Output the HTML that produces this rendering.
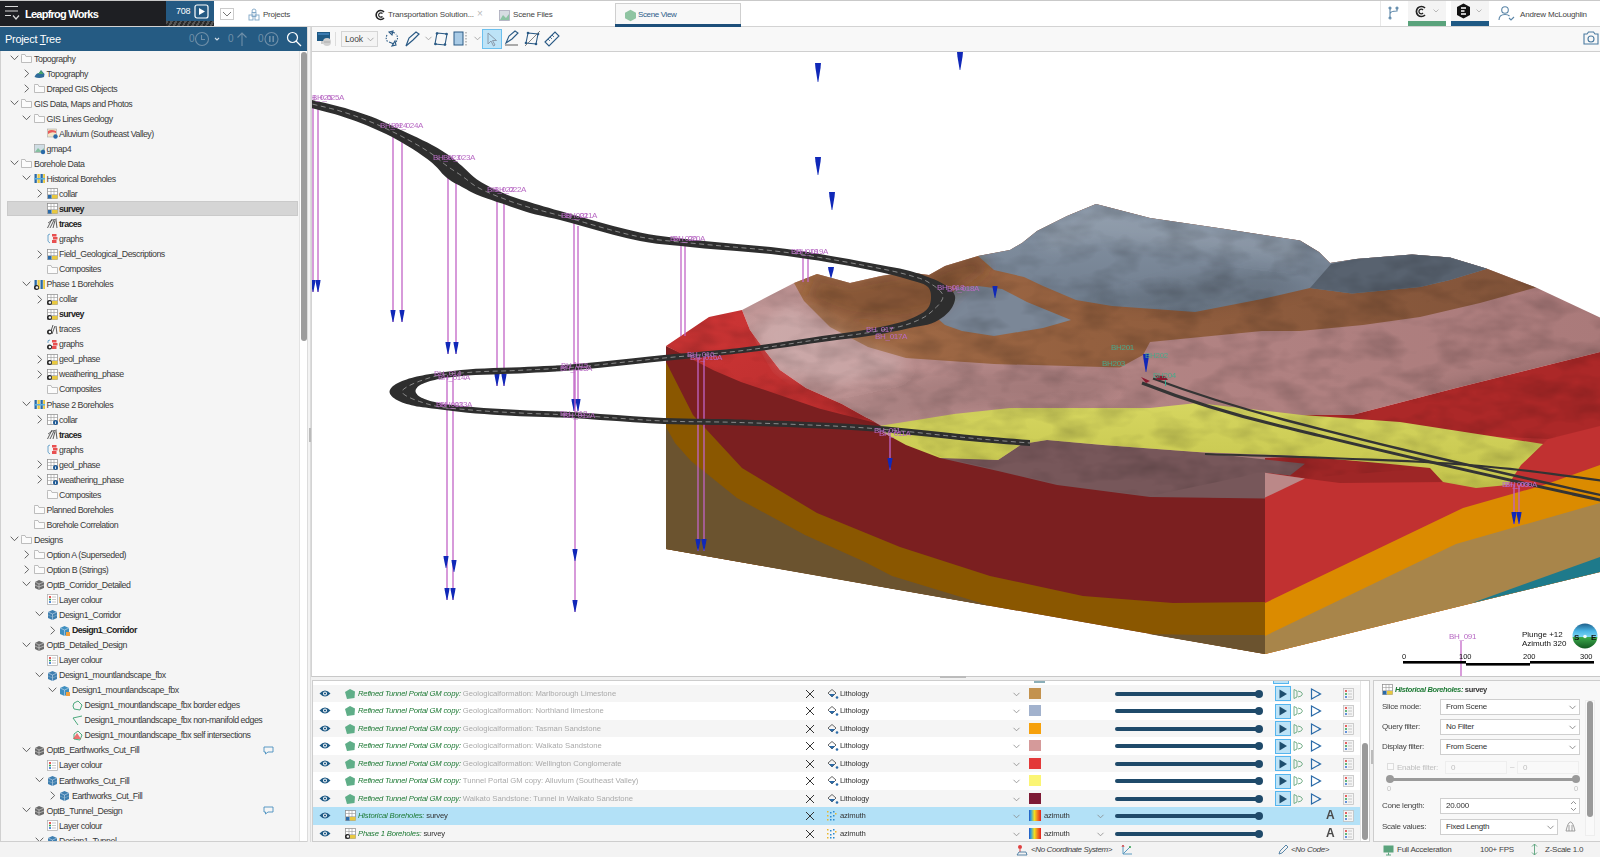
<!DOCTYPE html><html><head><meta charset="utf-8"><style>

*{box-sizing:border-box;margin:0;padding:0}
html,body{width:1600px;height:857px;overflow:hidden;background:#fff;font-family:"Liberation Sans",sans-serif;color:#333}
body{position:relative}
.a{position:absolute}
.tx{position:absolute;white-space:nowrap;font-size:8px;line-height:10px;color:#3a3a3a;letter-spacing:-0.15px}
svg{position:absolute;overflow:visible}


#topbar{left:0;top:0;width:1600px;height:27px;background:#fff;border-top:1px solid #c9c9c9;border-bottom:1px solid #d3d3d3}
#brand{left:0;top:1px;width:166px;height:25px;background:#1e1f23}
#cnt{left:166px;top:1px;width:48px;height:20px;background:#255a83}
#prog{left:166px;top:21px;width:48px;height:5px;background:repeating-linear-gradient(-60deg,#2a2a2a 0 2px,#555 2px 4px)}
#tab{left:615px;top:3px;width:126px;height:24px;background:#f8f8f8;border:1px solid #cfcfcf;border-bottom:none}
#tabline{left:615px;top:24px;width:126px;height:3px;background:#1d4f7a}
#treehdr{left:0;top:27px;width:308px;height:24px;background:#255b83}
#scenetb{left:311px;top:27px;width:1289px;height:25px;background:#f8f8f8;border-left:1px solid #d3d3d3;border-bottom:1px solid #cfcfcf}


#tree{left:0;top:51px;width:308px;height:791px;background:#f5f5f5;border-left:1px solid #d0d0d0;border-bottom:1px solid #cfcfcf;overflow:hidden}
.tr{position:absolute;left:0;width:300px;height:15px}
.tr .t{position:absolute;top:2.6px;white-space:nowrap;font-size:8.8px;line-height:10px;color:#3a3a3a;letter-spacing:-0.45px}
.tr svg{position:absolute}


.br{position:absolute;left:0;width:1047px;height:17.5px}
.br .t{position:absolute;top:4px;white-space:nowrap;font-size:7.7px;line-height:10px;letter-spacing:-0.2px}
.br svg{position:absolute}
.cb{position:absolute;background:#fff;border:1px solid #cfcfcf}
.lbl{position:absolute;white-space:nowrap;font-size:8px;line-height:10px;color:#444;letter-spacing:-0.25px}
.cbt{position:absolute;white-space:nowrap;font-size:8px;line-height:10px;color:#333;letter-spacing:-0.26px}

</style></head><body>
<div class="a" style="left:311px;top:52px;width:1289px;height:625px;background:#fff;border-left:1px solid #d3d3d3;border-bottom:1px solid #c8c8c8;overflow:hidden">
<svg style="left:-312px;top:-52px" width="1600" height="857" viewBox="0 0 1600 857">
<polygon points="666,346 714,368.0 741,379.5 779.5,392.5 820,406.3 876,420.5 906,437.5 940,454.5 998,467.5 1057,481.5 1150,493.5 1265,495.5 1265,654 666,549" fill="#7b1f20" />
<polygon points="666,362 693,415 742,468 817,513 900,547 990,576 1083,596 1173,603 1265,602 1265,654 666,549" fill="#8a5700" />
<polygon points="666,427 675,443 691,461 737,498 805,535 865,562 892,576 971,600 990,606 666,549" fill="#6b532f" />
<polygon points="1149,634 1200,635 1265,635 1265,654" fill="#6b532f" />
<polygon points="1265,472 1290,452 1400,430 1600,400 1600,572 1265,654" fill="#c13131" />
<polygon points="1265,603 1463,508 1544,485 1600,465 1600,572 1265,654" fill="#db8b00" />
<polygon points="1265,636 1456,544 1600,503 1600,572 1265,654" fill="#a8854a" />
<polygon points="1472,603 1600,557 1600,572" fill="#1e7a8b" />
<defs>
<linearGradient id="gpink" x1="0" y1="0" x2="1" y2="0"><stop offset="0" stop-color="#c29898"/><stop offset="0.35" stop-color="#b48686"/><stop offset="1" stop-color="#aa7a7a"/></linearGradient>
<linearGradient id="gbrown" x1="0" y1="0" x2="1" y2="0"><stop offset="0" stop-color="#a46d48"/><stop offset="0.4" stop-color="#94603f"/><stop offset="1" stop-color="#82543a"/></linearGradient>
<linearGradient id="ggrey" x1="0" y1="0" x2="0" y2="1"><stop offset="0" stop-color="#8795a6"/><stop offset="1" stop-color="#6f7c8c"/></linearGradient>
<linearGradient id="gyel" x1="0" y1="0" x2="0" y2="1"><stop offset="0" stop-color="#d6d660"/><stop offset="1" stop-color="#c4c44c"/></linearGradient>
<linearGradient id="gred" x1="0" y1="0" x2="1" y2="1"><stop offset="0" stop-color="#cf3636"/><stop offset="1" stop-color="#b82c2c"/></linearGradient>
</defs>
<polygon points="742,310 794,283 817,274 850,283 881,276 906,272 929,275 945,266 978,256 1010,250 1022,243 1037,231 1067,216 1096,204 1150,218 1225,229 1300,240.6 1319,252 1330,263 1356,259 1412,254.5 1450,257.5 1487,268.7 1536,287.5 1600,317.5 1600,352 1456,388 1352,415 1300,420 1300,460 1265,472 1265,498 1150,496 1057,484 998,470 940,457 906,440 876,423 842,404 806,388 780,370 766,352 750,330" fill="url(#gpink)" />
<polygon points="794,283 817,274 850,283 881,276 906,272 929,275 945,266 978,256 1010,250 1022,243 1037,231 1067,216 1096,204 1150,218 1225,229 1300,240.6 1319,252 1330,263 1356,259 1412,254.5 1450,257.5 1487,268.7 1536,287.5 1480,303 1420,317 1363,325 1300,331 1262,331 1150,342 1143,355 1120,367.5 994,364 906,358 868,347 830,327 804,301" fill="url(#gbrown)" />
<polygon points="978,256 1010,250 1022,243 1037,231 1067,216 1096,204 1150,218 1225,229 1300,240.6 1319,252 1330,263 1356,259 1412,254.5 1450,257.5 1487,268.7 1450,280 1420,287 1352,293.6 1310,288 1262,299 1195,312 1168,310 1112,306 1076,300 1043,286 1024,277 994,270" fill="url(#ggrey)" />
<polygon points="1331,264 1356,259 1412,254.5 1450,257.5 1487,268.7 1450,280 1420,287 1352,293.6 1310,288" fill="#58626f" />
<polygon points="957,287 978,286 1002,289 1027,302 1071,320 1043,328 994,336 962,331 945,325 937,318 942,309" fill="#7b8797" />
<polygon points="666,346 709,317 742,310 750,330 766,352 780,370 806,388 842,404 876,423 820,408.8 779.5,395 741,382 714,370.5" fill="url(#gred)" />
<polygon points="1302,415 1352,415 1456,388 1600,352 1600,426 1548,439 1400,432" fill="#ac2828" />
<polygon points="1265,458 1340,455 1430,467 1445,482 1340,483 1305,478.4 1265,472.7" fill="#9e2626" />
<polygon points="940,457 998,460 1022,444 1047,440 1103,445 1197,452 1305,463.7 1290,475.5 1265,472.7 1265,498.6 1150,497 1057,485 998,471 940,458" fill="#77575a" />
<polygon points="1265,472.7 1305,478.4 1265,497.6" fill="#bb8888" />
<polygon points="873,427 954,414 1010,408 1150,408 1197,403 1302,415 1400,422 1543,444 1521,465 1508,485 1476,488 1443,482 1430,468 1390,464 1300,456 1197,452 1103,445 1047,440 1022,444 998,460 940,458 906,445" fill="url(#gyel)" />
<defs><filter id="blr" x="-20%" y="-20%" width="140%" height="140%"><feGaussianBlur stdDeviation="7"/></filter><clipPath id="topclip"><polygon points="666,346 709,317 742,310 794,283 817,274 850,283 881,276 906,272 929,275 945,266 978,256 1010,250 1022,243 1037,231 1067,216 1096,204 1150,218 1225,229 1300,240.6 1319,252 1330,263 1356,259 1412,254.5 1450,257.5 1487,268.7 1536,287.5 1600,317.5 1600,352 1456,388 1352,415 1300,420 873,428 804,396 773,373 758,347 742,310"/></clipPath></defs>
<g clip-path="url(#topclip)"><g filter="url(#blr)">
<polygon points="805,300 817,274 850,283 881,276 906,272 929,275 945,266 978,256 990,268 960,290 935,315 900,322 850,318" fill="#5a3520" opacity="0.35"/>
<polygon points="752,330 790,305 830,325 870,346 905,358 900,372 840,385 780,372" fill="#ffffff" opacity="0.18"/>
<polygon points="830,405 880,385 960,372 1060,372 1120,380 1100,400 960,410 880,425" fill="#000000" opacity="0.09"/>
<polygon points="1037,231 1067,216 1096,204 1150,218 1225,229 1300,240.6 1300,262 1200,250 1100,240 1050,250" fill="#ffffff" opacity="0.10"/>
<polygon points="1100,300 1180,280 1262,270 1310,288 1262,299 1195,312 1168,310 1112,306" fill="#000000" opacity="0.10"/>
<polygon points="1420,390 1500,372 1600,352 1600,426 1548,439 1500,420" fill="#000000" opacity="0.12"/>
</g></g>
<defs><filter id="noise" x="0" y="0" width="100%" height="100%" filterUnits="userSpaceOnUse"><feTurbulence type="fractalNoise" baseFrequency="0.025 0.05" numOctaves="3" seed="11" result="t"/><feColorMatrix in="t" type="matrix" values="0 0 0 0 0  0 0 0 0 0  0 0 0 0 0  0 0 0 -1.6 0.95"/></filter><clipPath id="topclip2"><polygon points="666,346 709,317 742,310 794,283 817,274 850,283 881,276 906,272 929,275 945,266 978,256 1010,250 1022,243 1037,231 1067,216 1096,204 1150,218 1225,229 1300,240.6 1319,252 1330,263 1356,259 1412,254.5 1450,257.5 1487,268.7 1536,287.5 1600,317.5 1600,352 1600,430 1548,439 1543,444 1508,485 1476,488 1443,482 1430,468 1305,478 1265,472 1150,496 1057,484 998,470 940,457 906,440 876,423 820,408.8 779.5,395 741,382 714,370.5"/></clipPath></defs>
<g clip-path="url(#topclip2)" opacity="0.22"><rect x="660" y="195" width="940" height="300" fill="#000" filter="url(#noise)"/></g>

<g><line x1="313" y1="101" x2="313" y2="292" stroke="#c264c6" stroke-width="1.3"/>
<path d="M310.45,280 L315.55,280 L315.15000000000003,283.0 L313.3,292 L312.7,292 L310.84999999999997,283.0Z" fill="#1028b8"/>
<line x1="318" y1="106" x2="318" y2="292" stroke="#c264c6" stroke-width="1.3"/>
<path d="M315.45,280 L320.55,280 L320.15000000000003,283.0 L318.3,292 L317.7,292 L315.84999999999997,283.0Z" fill="#1028b8"/>
<line x1="393" y1="132" x2="393" y2="322" stroke="#c264c6" stroke-width="1.3"/>
<path d="M390.45,310 L395.55,310 L395.15000000000003,313.0 L393.3,322 L392.7,322 L390.84999999999997,313.0Z" fill="#1028b8"/>
<line x1="402" y1="137" x2="402" y2="322" stroke="#c264c6" stroke-width="1.3"/>
<path d="M399.45,310 L404.55,310 L404.15000000000003,313.0 L402.3,322 L401.7,322 L399.84999999999997,313.0Z" fill="#1028b8"/>
<line x1="448" y1="172" x2="448" y2="354" stroke="#c264c6" stroke-width="1.3"/>
<path d="M445.45,342 L450.55,342 L450.15000000000003,345.0 L448.3,354 L447.7,354 L445.84999999999997,345.0Z" fill="#1028b8"/>
<line x1="456" y1="178" x2="456" y2="354" stroke="#c264c6" stroke-width="1.3"/>
<path d="M453.45,342 L458.55,342 L458.15000000000003,345.0 L456.3,354 L455.7,354 L453.84999999999997,345.0Z" fill="#1028b8"/>
<line x1="497" y1="195" x2="497" y2="386" stroke="#c264c6" stroke-width="1.3"/>
<path d="M494.45,374 L499.55,374 L499.15000000000003,377.0 L497.3,386 L496.7,386 L494.84999999999997,377.0Z" fill="#1028b8"/>
<line x1="504" y1="199" x2="504" y2="386" stroke="#c264c6" stroke-width="1.3"/>
<path d="M501.45,374 L506.55,374 L506.15000000000003,377.0 L504.3,386 L503.7,386 L501.84999999999997,377.0Z" fill="#1028b8"/>
<line x1="574" y1="222" x2="574" y2="411" stroke="#c264c6" stroke-width="1.3"/>
<path d="M571.45,399 L576.55,399 L576.15,402.0 L574.3,411 L573.7,411 L571.85,402.0Z" fill="#1028b8"/>
<line x1="578" y1="226" x2="578" y2="411" stroke="#c264c6" stroke-width="1.3"/>
<path d="M575.45,399 L580.55,399 L580.15,402.0 L578.3,411 L577.7,411 L575.85,402.0Z" fill="#1028b8"/>
<line x1="681" y1="240" x2="681" y2="336" stroke="#c264c6" stroke-width="1.3"/>
<line x1="685" y1="244" x2="685" y2="336" stroke="#c264c6" stroke-width="1.3"/>
<line x1="803" y1="254" x2="803" y2="282" stroke="#c264c6" stroke-width="1.3"/>
<line x1="808" y1="258" x2="808" y2="282" stroke="#c264c6" stroke-width="1.3"/>
<line x1="447" y1="372" x2="447" y2="600" stroke="#c264c6" stroke-width="1.3"/>
<path d="M444.45,588 L449.55,588 L449.15000000000003,591.0 L447.3,600 L446.7,600 L444.84999999999997,591.0Z" fill="#1028b8"/>
<line x1="453" y1="376" x2="453" y2="600" stroke="#c264c6" stroke-width="1.3"/>
<path d="M450.45,588 L455.55,588 L455.15000000000003,591.0 L453.3,600 L452.7,600 L450.84999999999997,591.0Z" fill="#1028b8"/>
<path d="M443.45,556 L448.55,556 L448.15000000000003,559.0 L446.3,568 L445.7,568 L443.84999999999997,559.0Z" fill="#1028b8"/>
<path d="M451.45,560 L456.55,560 L456.15000000000003,563.0 L454.3,572 L453.7,572 L451.84999999999997,563.0Z" fill="#1028b8"/>
<line x1="575" y1="362" x2="575" y2="612" stroke="#c264c6" stroke-width="1.3"/>
<path d="M572.45,600 L577.55,600 L577.15,603.0 L575.3,612 L574.7,612 L572.85,603.0Z" fill="#1028b8"/>
<path d="M572.45,549 L577.55,549 L577.15,552.0 L575.3,561 L574.7,561 L572.85,552.0Z" fill="#1028b8"/>
<line x1="698" y1="352" x2="698" y2="551" stroke="#c264c6" stroke-width="1.3"/>
<path d="M695.45,539 L700.55,539 L700.15,542.0 L698.3,551 L697.7,551 L695.85,542.0Z" fill="#1028b8"/>
<line x1="704" y1="356" x2="704" y2="551" stroke="#c264c6" stroke-width="1.3"/>
<path d="M701.45,539 L706.55,539 L706.15,542.0 L704.3,551 L703.7,551 L701.85,542.0Z" fill="#1028b8"/>
<line x1="890" y1="430" x2="890" y2="470" stroke="#c264c6" stroke-width="1.3"/>
<path d="M887.45,458 L892.55,458 L892.15,461.0 L890.3,470 L889.7,470 L887.85,461.0Z" fill="#1028b8"/>
<line x1="1514" y1="485" x2="1514" y2="524" stroke="#c264c6" stroke-width="1.3"/>
<path d="M1511.45,512 L1516.55,512 L1516.1499999999999,515.0 L1514.3,524 L1513.7,524 L1511.8500000000001,515.0Z" fill="#1028b8"/>
<line x1="1519" y1="485" x2="1519" y2="524" stroke="#c264c6" stroke-width="1.3"/>
<path d="M1516.45,512 L1521.55,512 L1521.1499999999999,515.0 L1519.3,524 L1518.7,524 L1516.8500000000001,515.0Z" fill="#1028b8"/>
<line x1="1461" y1="641" x2="1461" y2="677" stroke="#c468c8" stroke-width="1.3"/>
<path d="M815.025,63 L820.975,63 L820.575,67.75 L818.3,82 L817.7,82 L815.425,67.75Z" fill="#1028b8"/>
<path d="M957.025,52 L962.975,52 L962.575,56.5 L960.3,70 L959.7,70 L957.425,56.5Z" fill="#1028b8"/>
<path d="M815.025,157 L820.975,157 L820.575,161.5 L818.3,175 L817.7,175 L815.425,161.5Z" fill="#1028b8"/>
<path d="M829.025,192 L834.975,192 L834.575,196.5 L832.3,210 L831.7,210 L829.425,196.5Z" fill="#1028b8"/>
<path d="M828.025,267 L833.975,267 L833.575,269.75 L831.3,278 L830.7,278 L828.425,269.75Z" fill="#1028b8"/>
<path d="M992.45,286 L997.55,286 L997.15,289.0 L995.3,298 L994.7,298 L992.85,289.0Z" fill="#1028b8"/>
<path d="M1143.025,354 L1148.975,354 L1148.5749999999998,358.5 L1146.3,372 L1145.7,372 L1143.4250000000002,358.5Z" fill="#1028b8"/></g>
<g><polygon points="296.0,96.0 298.6,96.7 301.2,97.3 303.7,97.9 306.3,98.6 309.1,99.3 312.0,100.0 316.2,101.0 320.7,102.0 325.4,103.1 330.3,104.2 335.2,105.4 340.0,106.7 345.1,108.1 350.3,109.7 355.5,111.3 360.7,112.9 365.9,114.7 371.0,116.6 376.1,118.6 381.1,120.8 386.1,123.0 391.0,125.3 396.0,127.7 401.0,130.0 406.3,132.5 411.7,135.0 417.2,137.6 422.5,140.2 427.5,142.6 432.0,145.0 434.8,146.6 437.5,148.0 439.9,149.4 442.3,150.9 444.6,152.4 447.0,154.0 449.5,155.8 452.1,157.8 454.6,159.8 457.1,161.8 459.5,163.9 462.0,166.0 464.4,168.2 466.8,170.5 469.1,172.8 471.5,175.1 474.1,177.3 477.0,179.5 481.3,182.3 486.2,185.0 491.4,187.7 496.8,190.2 502.0,192.6 507.0,194.7 510.9,196.2 514.7,197.6 518.4,198.8 522.2,199.9 526.0,201.1 530.0,202.3 534.6,203.7 539.2,205.1 543.8,206.4 548.8,207.8 554.1,209.4 560.0,211.0 571.3,214.2 584.5,218.0 598.7,222.1 613.2,226.0 627.3,229.6 640.0,232.5 648.8,234.2 656.9,235.5 664.6,236.5 672.5,237.5 680.8,238.4 690.0,239.5 704.4,241.0 720.2,242.5 736.8,243.9 753.9,245.4 770.8,247.1 787.0,249.0 802.4,251.2 818.2,253.8 833.8,256.4 848.8,259.1 862.7,261.7 875.0,264.0 881.9,265.3 888.3,266.4 894.2,267.5 899.8,268.6 905.0,269.8 910.0,271.0 913.4,271.9 916.5,272.9 919.5,273.8 922.3,274.8 925.1,275.9 928.0,277.0 931.0,278.2 934.0,279.3 936.9,280.6 939.8,281.9 942.5,283.4 945.0,285.0 947.1,286.6 949.2,288.3 951.2,290.1 952.9,292.0 954.2,294.0 955.0,296.0 955.2,298.1 954.9,300.2 954.3,302.5 953.4,304.7 952.3,306.9 951.0,309.0 949.1,311.4 946.8,313.8 944.1,316.2 941.2,318.3 938.2,320.3 935.0,322.0 931.3,323.5 927.4,324.7 923.2,325.6 918.9,326.3 914.5,327.1 910.0,328.0 904.6,329.2 899.1,330.4 893.3,331.6 887.4,332.8 881.3,333.9 875.0,335.0 866.9,336.3 858.4,337.4 849.6,338.5 840.5,339.6 831.3,340.8 822.0,342.0 811.0,343.5 799.4,345.2 787.6,346.9 776.0,348.6 765.0,350.2 755.0,351.5 748.6,352.3 742.8,353.0 737.3,353.6 731.9,354.2 726.2,354.8 720.0,355.5 711.6,356.4 702.8,357.2 693.7,358.1 684.2,359.0 674.3,360.0 664.0,361.0 649.4,362.5 633.4,364.2 616.7,366.0 600.1,367.7 584.3,369.3 570.0,370.5 560.8,371.2 552.2,371.7 544.1,372.2 536.2,372.6 528.2,373.0 520.0,373.4 511.1,373.8 502.0,374.1 492.8,374.4 483.8,374.7 475.3,375.1 467.5,375.6 462.3,376.0 457.3,376.5 452.6,377.0 448.1,377.5 443.9,378.1 440.0,378.8 437.3,379.3 434.8,379.9 432.4,380.5 430.2,381.1 428.0,381.8 426.0,382.5 424.5,383.1 422.9,383.7 421.5,384.3 420.2,385.0 419.0,385.7 418.0,386.5 417.3,387.2 416.8,387.9 416.2,388.7 415.8,389.5 415.6,390.2 415.5,391.0 415.6,391.8 415.8,392.5 416.2,393.3 416.8,394.1 417.3,394.8 418.0,395.5 419.0,396.3 420.2,397.0 421.5,397.7 422.9,398.3 424.5,398.9 426.0,399.5 428.0,400.2 430.2,400.9 432.4,401.5 434.8,402.1 437.3,402.7 440.0,403.2 443.9,403.9 448.1,404.5 452.6,405.1 457.3,405.6 462.3,406.1 467.5,406.6 475.3,407.3 483.8,407.9 492.8,408.5 502.0,409.0 511.1,409.5 520.0,410.0 528.2,410.4 536.2,410.7 544.1,411.0 552.2,411.2 560.8,411.6 570.0,412.0 584.2,412.8 600.1,413.9 616.7,415.1 633.4,416.3 649.4,417.3 664.0,418.0 674.3,418.3 684.2,418.6 693.7,418.7 702.8,418.8 711.6,418.9 720.0,419.0 726.1,419.1 731.5,419.3 736.8,419.4 742.2,419.6 748.1,419.8 755.0,420.0 770.0,420.5 787.6,421.1 807.0,421.9 827.3,422.7 847.6,423.8 867.0,425.0 886.3,426.6 906.3,428.4 926.3,430.5 945.7,432.6 963.8,434.4 980.0,436.0 989.5,436.8 998.2,437.5 1006.3,438.2 1014.1,438.8 1021.9,439.4 1030.0,440.0 1030.0,446.0 1021.9,445.4 1014.1,444.8 1006.3,444.2 998.2,443.5 989.5,442.8 980.0,442.0 963.8,440.4 945.7,438.6 926.3,436.5 906.3,434.4 886.3,432.6 867.0,431.0 847.6,429.8 827.3,428.7 807.0,427.9 787.6,427.1 770.0,426.5 755.0,426.0 748.1,425.8 742.2,425.6 736.8,425.4 731.5,425.3 726.1,425.1 720.0,425.0 711.6,424.9 702.8,424.8 693.7,424.7 684.2,424.6 674.3,424.3 664.0,424.0 649.4,423.3 633.4,422.2 616.7,421.1 600.1,419.9 584.2,418.8 570.0,418.0 560.8,417.6 552.2,417.3 544.1,417.1 536.2,416.8 528.2,416.6 520.0,416.2 511.2,415.7 502.2,415.2 493.2,414.7 484.3,414.1 475.7,413.4 467.5,412.7 461.0,412.0 454.7,411.3 448.6,410.6 442.7,409.8 437.1,409.1 432.0,408.4 428.6,408.0 425.5,407.6 422.5,407.2 419.6,406.8 416.8,406.4 414.0,405.8 411.5,405.2 409.0,404.6 406.6,403.9 404.3,403.2 402.1,402.4 400.0,401.5 398.4,400.8 396.9,400.0 395.5,399.2 394.2,398.3 393.0,397.4 392.0,396.5 391.3,395.7 390.8,395.0 390.2,394.2 389.8,393.3 389.6,392.5 389.5,391.7 389.6,390.9 389.9,390.1 390.3,389.3 390.8,388.5 391.4,387.7 392.0,387.0 393.0,386.1 394.2,385.2 395.5,384.3 396.9,383.5 398.4,382.8 400.0,382.0 402.1,381.1 404.3,380.2 406.6,379.4 409.0,378.6 411.5,377.9 414.0,377.2 416.8,376.5 419.6,375.9 422.5,375.4 425.4,374.8 428.6,374.3 432.0,373.8 437.1,373.0 442.7,372.2 448.6,371.4 454.7,370.7 461.0,370.0 467.5,369.4 475.7,368.8 484.3,368.4 493.2,368.1 502.2,367.8 511.2,367.6 520.0,367.2 528.2,366.8 536.2,366.5 544.1,366.1 552.2,365.7 560.8,365.2 570.0,364.5 584.3,363.3 600.1,361.7 616.7,360.0 633.4,358.2 649.4,356.5 664.0,355.0 674.3,354.0 684.2,353.2 693.7,352.4 702.8,351.6 711.6,350.8 720.0,350.0 726.2,349.4 731.9,348.8 737.3,348.2 742.8,347.5 748.6,346.8 755.0,346.0 765.0,344.6 776.0,343.0 787.6,341.3 799.5,339.4 811.0,337.7 822.0,336.0 831.3,334.7 840.5,333.4 849.6,332.2 858.4,330.9 866.9,329.5 875.0,328.0 881.4,326.7 887.7,325.4 893.8,324.0 899.6,322.5 905.0,320.9 910.0,319.0 913.6,317.4 917.2,315.8 920.5,314.1 923.5,312.2 926.0,310.2 928.0,308.0 929.1,306.2 929.9,304.2 930.5,302.1 930.9,300.0 931.0,297.9 931.0,296.0 930.9,294.4 930.7,292.8 930.3,291.2 929.8,289.7 929.0,288.3 928.0,287.0 926.0,285.4 923.4,284.1 920.4,283.0 917.1,282.1 913.6,281.1 910.0,280.0 905.0,278.5 899.8,277.0 894.3,275.5 888.3,274.0 881.9,272.5 875.0,271.0 862.7,268.5 848.8,265.8 833.8,263.2 818.2,260.6 802.4,258.2 787.0,256.0 770.8,254.1 753.9,252.5 736.8,251.0 720.2,249.7 704.4,248.4 690.0,247.0 680.8,246.1 672.5,245.3 664.6,244.5 656.9,243.7 648.8,242.5 640.0,241.0 627.3,238.2 613.2,234.7 598.7,230.7 584.5,226.7 571.3,223.0 560.0,220.0 554.1,218.6 548.8,217.4 543.8,216.3 539.2,215.3 534.6,214.2 530.0,213.0 526.0,211.8 522.2,210.6 518.5,209.3 514.8,208.0 511.0,206.7 507.0,205.3 502.1,203.6 496.9,201.9 491.6,200.1 486.3,198.3 481.4,196.5 477.0,194.7 474.2,193.4 471.6,192.2 469.1,190.9 466.8,189.6 464.4,188.3 462.0,187.0 459.5,185.6 456.9,184.3 454.4,182.9 451.9,181.4 449.4,179.8 447.0,178.0 444.5,175.8 442.1,173.4 439.9,170.8 437.5,168.1 434.9,165.4 432.0,162.8 427.6,159.3 422.6,155.7 417.3,152.1 411.9,148.6 406.4,145.2 401.0,142.0 396.1,139.2 391.1,136.6 386.1,134.1 381.1,131.7 376.1,129.4 371.0,127.2 365.9,125.1 360.7,123.0 355.5,121.1 350.3,119.2 345.1,117.5 340.0,115.8 335.2,114.3 330.3,113.0 325.5,111.7 320.7,110.5 316.2,109.3 312.0,108.2 309.1,107.4 306.3,106.7 303.7,106.0 301.2,105.4 298.6,104.7 296.0,104.0" fill="#2e2e2e"/>
<path d="M296.0,100.0 L298.6,100.7 L301.2,101.3 L303.7,101.9 L306.3,102.6 L309.1,103.3 L312.0,104.0 L316.2,105.0 L320.7,106.1 L325.5,107.2 L330.3,108.4 L335.2,109.6 L340.0,111.0 L345.1,112.6 L350.3,114.3 L355.5,116.1 L360.7,118.0 L365.9,120.0 L371.0,122.0 L376.1,124.1 L381.1,126.3 L386.1,128.6 L391.1,131.0 L396.0,133.4 L401.0,136.0 L406.3,138.8 L411.8,141.8 L417.3,144.9 L422.6,148.0 L427.5,151.1 L432.0,154.0 L434.9,156.1 L437.5,158.1 L439.9,160.2 L442.2,162.2 L444.5,164.1 L447.0,166.0 L449.5,167.7 L452.0,169.4 L454.5,171.0 L457.0,172.7 L459.5,174.3 L462.0,176.0 L464.4,177.8 L466.8,179.6 L469.1,181.5 L471.5,183.4 L474.1,185.2 L477.0,187.0 L481.4,189.3 L486.3,191.6 L491.5,193.9 L496.8,196.1 L502.1,198.1 L507.0,200.0 L510.9,201.5 L514.7,202.8 L518.5,204.0 L522.2,205.2 L526.0,206.4 L530.0,207.6 L534.6,208.9 L539.2,210.1 L543.8,211.3 L548.8,212.6 L554.1,214.0 L560.0,215.5 L571.3,218.6 L584.5,222.5 L598.7,226.6 L613.2,230.6 L627.3,234.2 L640.0,237.0 L648.8,238.5 L656.9,239.7 L664.6,240.5 L672.5,241.3 L680.8,242.1 L690.0,243.0 L704.4,244.4 L720.2,245.8 L736.8,247.3 L753.9,248.8 L770.8,250.5 L787.0,252.5 L802.4,254.7 L818.2,257.2 L833.8,259.8 L848.8,262.5 L862.7,265.1 L875.0,267.5 L881.9,268.9 L888.3,270.2 L894.3,271.5 L899.8,272.8 L905.0,274.1 L910.0,275.5 L913.4,276.5 L916.6,277.4 L919.6,278.3 L922.5,279.3 L925.3,280.5 L928.0,282.0 L931.0,283.9 L934.3,286.0 L937.4,288.4 L940.2,290.9 L942.1,293.4 L943.0,296.0 L942.6,298.8 L941.0,301.7 L938.7,304.7 L935.9,307.7 L932.9,310.5 L930.0,313.0 L927.1,315.2 L924.1,317.2 L920.9,318.9 L917.4,320.5 L913.8,322.0 L910.0,323.5 L904.9,325.2 L899.4,326.7 L893.7,328.0 L887.6,329.2 L881.4,330.3 L875.0,331.5 L866.9,332.9 L858.4,334.1 L849.6,335.3 L840.5,336.5 L831.3,337.7 L822.0,339.0 L811.0,340.6 L799.5,342.4 L787.6,344.2 L776.0,346.0 L765.0,347.6 L755.0,349.0 L748.6,349.8 L742.8,350.5 L737.3,351.2 L731.9,351.8 L726.2,352.4 L720.0,353.0 L711.6,353.8 L702.8,354.6 L693.7,355.4 L684.2,356.2 L674.3,357.0 L664.0,358.0 L649.4,359.5 L633.4,361.2 L616.7,362.9 L600.1,364.7 L584.3,366.3 L570.0,367.5 L560.8,368.2 L552.2,368.7 L544.1,369.2 L536.2,369.5 L528.2,369.9 L520.0,370.3 L511.2,370.7 L502.2,371.0 L493.2,371.2 L484.3,371.5 L475.7,371.9 L467.5,372.5 L461.1,373.0 L455.0,373.4 L449.0,373.9 L443.2,374.6 L437.6,375.6 L432.0,377.0 L426.1,378.9 L419.4,381.2 L413.0,383.8 L407.4,386.5 L403.5,389.2 L402.0,391.7 L403.5,394.1 L407.4,396.6 L413.0,399.1 L419.5,401.5 L426.1,403.6 L432.0,405.3 L437.6,406.6 L443.3,407.6 L449.0,408.2 L455.0,408.7 L461.1,409.2 L467.5,409.7 L475.7,410.4 L484.3,411.0 L493.2,411.6 L502.2,412.1 L511.2,412.5 L520.0,413.0 L528.2,413.4 L536.2,413.7 L544.1,414.0 L552.2,414.2 L560.8,414.6 L570.0,415.0 L584.2,415.8 L600.1,416.9 L616.7,418.1 L633.4,419.3 L649.4,420.3 L664.0,421.0 L674.3,421.3 L684.2,421.6 L693.7,421.7 L702.8,421.8 L711.6,421.9 L720.0,422.0 L726.1,422.1 L731.5,422.3 L736.8,422.4 L742.2,422.6 L748.1,422.8 L755.0,423.0 L770.0,423.5 L787.6,424.1 L807.0,424.9 L827.3,425.7 L847.6,426.8 L867.0,428.0 L886.3,429.6 L906.3,431.4 L926.3,433.5 L945.7,435.6 L963.8,437.4 L980.0,439.0 L989.5,439.8 L998.2,440.5 L1006.3,441.2 L1014.1,441.8 L1021.9,442.4 L1030.0,443.0" fill="none" stroke="#b0b0b0" stroke-width="0.7" stroke-dasharray="5 3.5"/>
<polygon points="1205.0,455.0 1216.7,455.4 1228.3,455.7 1239.8,456.0 1251.3,456.4 1263.0,456.7 1274.9,457.1 1287.2,457.5 1300.0,458.0 1316.4,458.6 1334.0,459.3 1352.2,459.9 1370.7,460.7 1389.1,461.4 1407.1,462.3 1424.1,463.1 1439.9,464.1 1451.0,464.8 1461.4,465.6 1471.5,466.4 1481.2,467.2 1490.7,468.1 1500.3,469.0 1509.9,470.0 1519.9,471.1 1530.4,472.3 1540.9,473.6 1551.6,474.9 1562.2,476.4 1572.9,477.8 1583.5,479.3 1594.2,480.7 1604.9,482.1 1605.1,479.9 1594.5,478.5 1583.8,477.1 1573.2,475.6 1562.5,474.2 1551.8,472.8 1541.2,471.4 1530.6,470.1 1520.1,468.9 1510.2,467.8 1500.5,466.9 1490.9,465.9 1481.4,465.0 1471.6,464.2 1461.6,463.4 1451.1,462.6 1440.1,461.9 1424.2,461.0 1407.2,460.1 1389.2,459.3 1370.8,458.6 1352.3,457.9 1334.1,457.2 1316.5,456.6 1300.0,456.0 1287.3,455.5 1275.0,455.1 1263.1,454.8 1251.4,454.4 1239.8,454.1 1228.3,453.7 1216.8,453.4 1205.0,453.0" fill="#333"/>
<path d="M1142,383 C1190,402 1230,414 1280,426 C1350,443 1420,461 1605,501" fill="none" stroke="#343434" stroke-width="3"/>
<path d="M1153,378.5 C1200,396 1240,408 1285,420 C1355,438 1425,456 1605,496" fill="none" stroke="#343434" stroke-width="2.4"/>
<path d="M1141,377 L1150,381 L1146,383 Z" fill="#8a1a30"/>
<path d="M1155,375 L1165,376 L1168,380 L1157,380 Z" fill="#8a1a30"/>
<line x1="1165.5" y1="380" x2="1165.5" y2="386" stroke="#3aa890" stroke-width="1"/></g>
<g><text x="305" y="100" font-size="8" fill="#b86ac4" font-family="Liberation Sans" letter-spacing="-0.3">BH_025</text>
<text x="312" y="100" font-size="8" fill="#b86ac4" font-family="Liberation Sans" letter-spacing="-0.3">BH_025A</text>
<text x="380" y="128" font-size="8" fill="#b86ac4" font-family="Liberation Sans" letter-spacing="-0.3">BH_024</text>
<text x="391" y="128" font-size="8" fill="#b86ac4" font-family="Liberation Sans" letter-spacing="-0.3">BH_024A</text>
<text x="433" y="160" font-size="8" fill="#b86ac4" font-family="Liberation Sans" letter-spacing="-0.3">BH_023</text>
<text x="443" y="160" font-size="8" fill="#b86ac4" font-family="Liberation Sans" letter-spacing="-0.3">BH_023A</text>
<text x="487" y="192" font-size="8" fill="#b86ac4" font-family="Liberation Sans" letter-spacing="-0.3">BH_022</text>
<text x="494" y="192" font-size="8" fill="#b86ac4" font-family="Liberation Sans" letter-spacing="-0.3">BH_022A</text>
<text x="561" y="218" font-size="8" fill="#b86ac4" font-family="Liberation Sans" letter-spacing="-0.3">BH_021</text>
<text x="565" y="218" font-size="8" fill="#b86ac4" font-family="Liberation Sans" letter-spacing="-0.3">BH_021A</text>
<text x="670" y="241" font-size="8" fill="#b86ac4" font-family="Liberation Sans" letter-spacing="-0.3">BH_020</text>
<text x="673" y="241" font-size="8" fill="#b86ac4" font-family="Liberation Sans" letter-spacing="-0.3">BH_020A</text>
<text x="791" y="254" font-size="8" fill="#b86ac4" font-family="Liberation Sans" letter-spacing="-0.3">BH_019</text>
<text x="796" y="254" font-size="8" fill="#b86ac4" font-family="Liberation Sans" letter-spacing="-0.3">BH_019A</text>
<text x="937" y="290" font-size="8" fill="#b86ac4" font-family="Liberation Sans" letter-spacing="-0.3">BH_018</text>
<text x="947" y="291" font-size="8" fill="#b86ac4" font-family="Liberation Sans" letter-spacing="-0.3">BH_018A</text>
<text x="866" y="332" font-size="8" fill="#b86ac4" font-family="Liberation Sans" letter-spacing="-0.3">BH_017</text>
<text x="875" y="339" font-size="8" fill="#b86ac4" font-family="Liberation Sans" letter-spacing="-0.3">BH_017A</text>
<text x="687" y="357" font-size="8" fill="#b86ac4" font-family="Liberation Sans" letter-spacing="-0.3">BH_016</text>
<text x="690" y="360" font-size="8" fill="#b86ac4" font-family="Liberation Sans" letter-spacing="-0.3">BH_016A</text>
<text x="561" y="368" font-size="8" fill="#b86ac4" font-family="Liberation Sans" letter-spacing="-0.3">BH_015</text>
<text x="560" y="371" font-size="8" fill="#b86ac4" font-family="Liberation Sans" letter-spacing="-0.3">BH_015A</text>
<text x="434" y="376" font-size="8" fill="#b86ac4" font-family="Liberation Sans" letter-spacing="-0.3">BH_014</text>
<text x="438" y="380" font-size="8" fill="#b86ac4" font-family="Liberation Sans" letter-spacing="-0.3">BH_014A</text>
<text x="436" y="407" font-size="8" fill="#b86ac4" font-family="Liberation Sans" letter-spacing="-0.3">BH_013</text>
<text x="440" y="407" font-size="8" fill="#b86ac4" font-family="Liberation Sans" letter-spacing="-0.3">BH_013A</text>
<text x="560" y="416" font-size="8" fill="#b86ac4" font-family="Liberation Sans" letter-spacing="-0.3">BH_012</text>
<text x="563" y="418" font-size="8" fill="#b86ac4" font-family="Liberation Sans" letter-spacing="-0.3">BH_012A</text>
<text x="874" y="433" font-size="8" fill="#b86ac4" font-family="Liberation Sans" letter-spacing="-0.3">BH_011</text>
<text x="879" y="436" font-size="8" fill="#b86ac4" font-family="Liberation Sans" letter-spacing="-0.3">BH_011A</text>
<text x="1502" y="487" font-size="8" fill="#b86ac4" font-family="Liberation Sans" letter-spacing="-0.3">BH_009</text>
<text x="1505" y="487" font-size="8" fill="#b86ac4" font-family="Liberation Sans" letter-spacing="-0.3">BH_009A</text>
<text x="1449" y="639" font-size="8" fill="#b86ac4" font-family="Liberation Sans" letter-spacing="-0.3">BH_091</text>
<text x="1111" y="350" font-size="8" fill="#4aa88a" font-family="Liberation Sans" letter-spacing="-0.3">BH201</text>
<text x="1145" y="358" font-size="8" fill="#4aa88a" font-family="Liberation Sans" letter-spacing="-0.3">BH202</text>
<text x="1102" y="366" font-size="8" fill="#4aa88a" font-family="Liberation Sans" letter-spacing="-0.3">BH203</text>
<text x="1153" y="378" font-size="8" fill="#4aa88a" font-family="Liberation Sans" letter-spacing="-0.3">BH204</text></g>
<text x="1402" y="659" font-size="7.5" fill="#111" font-family="Liberation Sans">0</text>
<text x="1459" y="659" font-size="7.5" fill="#111" font-family="Liberation Sans">100</text>
<text x="1523" y="659" font-size="7.5" fill="#111" font-family="Liberation Sans">200</text>
<text x="1580" y="659" font-size="7.5" fill="#111" font-family="Liberation Sans">300</text>
<rect x="1403" y="661" width="63" height="2.6" fill="#000"/>
<rect x="1466" y="663" width="64" height="2.6" fill="#000"/>
<rect x="1530" y="661" width="64" height="2.6" fill="#000"/>
<text x="1522" y="637" font-size="8" fill="#111" font-family="Liberation Sans">Plunge +12</text>
<text x="1522" y="646" font-size="8" fill="#111" font-family="Liberation Sans">Azimuth 320</text>
<defs><linearGradient id="glb1" x1="0" y1="0" x2="0" y2="1"><stop offset="0" stop-color="#1e5f8a"/><stop offset="0.3" stop-color="#49b5e5"/><stop offset="0.55" stop-color="#7fd8f5"/><stop offset="0.56" stop-color="#3aa84a"/><stop offset="1" stop-color="#145a22"/></linearGradient></defs>
<circle cx="1585" cy="636" r="12.5" fill="url(#glb1)"/>
<circle cx="1585" cy="636.5" r="1.8" fill="#fff" opacity="0.9"/>
<text x="1574" y="640" font-size="8" font-weight="bold" fill="#111" font-family="Liberation Sans">S</text>
<text x="1591" y="640" font-size="8" font-weight="bold" fill="#111" font-family="Liberation Sans">E</text>

</svg></div>

<div id="topbar" class="a"></div>
<div id="brand" class="a">
 <svg style="left:4px;top:4px" width="18" height="18" viewBox="0 0 18 18"><g stroke="#d8d8d8" stroke-width="1.2" fill="none"><path d="M1 1.5H14M1 6H14M1 10.5H7"/><path d="M9 10.5l3 3.5 3-3.5"/></g></svg>
 <div class="tx" style="left:25px;top:7px;font-size:11px;line-height:13px;font-weight:bold;color:#fff;letter-spacing:-0.75px">Leapfrog Works</div>
</div>
<div id="cnt" class="a">
 <div class="tx" style="left:10px;top:5px;font-size:9px;color:#fff;letter-spacing:-0.3px">708</div>
 <svg style="left:28px;top:3px" width="15" height="15" viewBox="0 0 15 15"><rect x="1" y="1" width="13" height="13" rx="2" fill="none" stroke="#fff" stroke-width="1.2"/><path d="M5 4L11 7.5L5 11Z" fill="#fff"/></svg>
</div>
<div id="prog" class="a"></div>
<div class="a" style="left:220px;top:8px;width:14px;height:12px;border:1px solid #ccc;background:#fff"></div>
<svg style="left:222px;top:10px" width="10" height="8" viewBox="0 0 10 8"><path d="M1 2l4 4 4-4" stroke="#777" fill="none" stroke-width="1"/></svg>
<svg style="left:248px;top:8px" width="12" height="13" viewBox="0 0 12 13"><g fill="none" stroke="#7fa6c6" stroke-width="0.9"><circle cx="6" cy="3" r="2"/><rect x="1" y="7" width="4" height="5"/><rect x="7" y="7" width="4" height="5"/><rect x="4" y="4.5" width="4" height="4"/></g></svg>
<div class="tx" style="left:263px;top:10px;font-size:8px;color:#444;letter-spacing:-0.24px">Projects</div>
<svg style="left:375px;top:9px" width="11" height="12" viewBox="0 0 11 12"><path d="M9 3A4.5 4.5 0 1 0 9 9" stroke="#222" stroke-width="1.6" fill="none"/><path d="M7.5 4.5A2.2 2.2 0 1 0 7.5 7.5" stroke="#222" stroke-width="1.2" fill="none"/></svg>
<div class="tx" style="left:388px;top:10px;font-size:8px;color:#444;letter-spacing:-0.12px">Transportation Solution...</div>
<div class="tx" style="left:477px;top:9px;font-size:10px;color:#bbb">&#215;</div>
<svg style="left:499px;top:9px" width="11" height="12" viewBox="0 0 11 12"><rect x="0.5" y="1.5" width="10" height="10" fill="#d6dde2" stroke="#aab" stroke-width="0.8"/><path d="M1 11L4 6L7 9L10 5V11Z" fill="#8cc4a4"/></svg>
<div class="tx" style="left:513px;top:10px;font-size:8px;color:#444;letter-spacing:-0.2px">Scene Files</div>
<div id="tab" class="a"></div>
<div id="tabline" class="a"></div>
<svg style="left:624px;top:9px" width="13" height="13" viewBox="0 0 13 13"><path d="M6.5 0.8L12 3.8V9.2L6.5 12.2L1 9.2V3.8Z" fill="#8fc4a2"/></svg>
<div class="tx" style="left:638px;top:10px;font-size:8px;color:#2c5d8a;letter-spacing:-0.36px">Scene View</div>
<div class="a" style="left:1380px;top:1px;width:1px;height:25px;background:#e8e8e8"></div>
<svg style="left:1388px;top:6px" width="12" height="14" viewBox="0 0 12 14"><g stroke="#5b86a8" stroke-width="1.1" fill="none"><path d="M2 2V12M2 8Q2 5 9 5V2"/><circle cx="2" cy="2" r="1"/><circle cx="2" cy="12" r="1"/><circle cx="9" cy="2" r="1"/></g></svg>
<div class="a" style="left:1408px;top:1px;width:38px;height:20px;background:#f4f4f4"></div>
<div class="a" style="left:1408px;top:21px;width:38px;height:5px;background:#5aa37c"></div>
<svg style="left:1415px;top:5px" width="12" height="13" viewBox="0 0 12 13"><path d="M10 3A5 5 0 1 0 10 10" stroke="#222" stroke-width="1.7" fill="none"/><path d="M8 5A2.3 2.3 0 1 0 8 8" stroke="#222" stroke-width="1.3" fill="none"/></svg>
<svg style="left:1433px;top:9px" width="6" height="4" viewBox="0 0 6 4"><path d="M0.5 0.5l2.5 2.5 2.5-2.5" stroke="#aaa" fill="none" stroke-width="0.8"/></svg>
<div class="a" style="left:1451px;top:1px;width:38px;height:20px;background:#f4f4f4"></div>
<div class="a" style="left:1451px;top:21px;width:38px;height:5px;background:#1f5a85"></div>
<svg style="left:1456px;top:3px" width="15" height="16" viewBox="0 0 15 16"><path d="M7.5 0.5L14 4V12L7.5 15.5L1 12V4Z" fill="#111"/><path d="M5 5H10M5 8H8.5M5 11H10" stroke="#fff" stroke-width="1.5"/></svg>
<svg style="left:1476px;top:9px" width="6" height="4" viewBox="0 0 6 4"><path d="M0.5 0.5l2.5 2.5 2.5-2.5" stroke="#aaa" fill="none" stroke-width="0.8"/></svg>
<svg style="left:1498px;top:5px" width="17" height="17" viewBox="0 0 17 17"><g stroke="#5b86a8" stroke-width="1.1" fill="none"><circle cx="7" cy="5" r="3.3"/><path d="M1 15Q1 9.5 7 9.5Q10 9.5 11.5 11"/><path d="M11 13l2 2 3-3"/></g></svg>
<div class="tx" style="left:1520px;top:10px;font-size:8px;color:#444;letter-spacing:-0.2px">Andrew McLoughlin</div>
<div id="treehdr" class="a">
 <div class="tx" style="left:5px;top:6px;font-size:11px;line-height:13px;color:#fff;letter-spacing:-0.3px">Project <u>T</u>ree</div>
 <div class="tx" style="left:189px;top:7px;font-size:10px;color:#6f8fa8">0</div>
 <svg style="left:195px;top:4px" width="30" height="16" viewBox="0 0 30 16"><g stroke="#6f8fa8" stroke-width="1.1" fill="none"><circle cx="7" cy="8" r="6.5"/><path d="M6.5 4V8.5H10"/></g><path d="M20 7l2 2 2-2" stroke="#cfdbe6" fill="none" stroke-width="1.1"/></svg>
 <div class="tx" style="left:228px;top:7px;font-size:10px;color:#6f8fa8">0</div>
 <svg style="left:236px;top:4px" width="12" height="16" viewBox="0 0 12 16"><path d="M6 15V2M1.5 6.5L6 2l4.5 4.5" stroke="#6f8fa8" stroke-width="1.1" fill="none"/></svg>
 <div class="tx" style="left:258px;top:7px;font-size:10px;color:#6f8fa8">0</div>
 <svg style="left:264px;top:4px" width="16" height="16" viewBox="0 0 16 16"><g stroke="#6f8fa8" stroke-width="1.1" fill="none"><circle cx="7.5" cy="8" r="6.5"/><path d="M5.8 5V11M9.2 5V11" stroke-width="1.6"/></g></svg>
 <svg style="left:286px;top:4px" width="16" height="16" viewBox="0 0 16 16"><g stroke="#fff" stroke-width="1.2" fill="none"><circle cx="6.5" cy="6.5" r="5"/><path d="M10 10L15 15"/></g></svg>
</div>
<div id="scenetb" class="a"></div>
<svg style="left:316px;top:31px" width="17" height="16" viewBox="0 0 17 16"><rect x="1" y="1" width="13" height="9" fill="#1f5a85"/><rect x="2" y="2" width="11" height="2" fill="#3a7ab0"/><path d="M5 10V13H10V10" fill="#ccc"/><ellipse cx="11" cy="11" rx="4" ry="4" fill="#d0d0d0"/><path d="M8 11H14" stroke="#aaa"/></svg>
<div class="a" style="left:335px;top:32px;width:1px;height:14px;background:#ddd"></div>
<div class="a" style="left:341px;top:31px;width:37px;height:16px;background:#f4f4f4;border:1px solid #d5d5d5"></div>
<div class="tx" style="left:345px;top:34px;font-size:8.5px;color:#444">Look</div>
<svg style="left:367px;top:37px" width="7" height="5" viewBox="0 0 7 5"><path d="M0.5 0.8L3.5 3.8L6.5 0.8" stroke="#999" fill="none" stroke-width="0.8"/></svg>
<svg style="left:384px;top:30px" width="17" height="17" viewBox="0 0 17 17"><g fill="none" stroke="#2a5a85" stroke-width="1.1"><path d="M3 5Q1 9 4 12M12 12Q15 8 12 4" stroke-dasharray="1.5 1.2"/><path d="M5 2L9 1L8 5Z M8 16L12 15L11 11Z"/><path d="M5 12L10 14M11 3L7 2"/></g></svg>
<svg style="left:404px;top:30px" width="17" height="17" viewBox="0 0 17 17"><path d="M2 16L5 8L12 2L15 4L9 10Z" fill="none" stroke="#2a5a85" stroke-width="1.2"/></svg>
<svg style="left:425px;top:36px" width="7" height="5" viewBox="0 0 7 5"><path d="M0.5 0.8L3.5 3.8L6.5 0.8" stroke="#999" fill="none" stroke-width="0.8"/></svg>
<svg style="left:433px;top:31px" width="16" height="16" viewBox="0 0 16 16"><path d="M4 2L14 3L12 14L2 13Z" fill="none" stroke="#2a5a85" stroke-width="1.1"/><circle cx="4" cy="2.5" r="1.3" fill="#2a5a85"/><circle cx="13.5" cy="3" r="1.3" fill="#2a5a85"/><circle cx="12" cy="13.5" r="1.3" fill="#2a5a85"/><circle cx="2.5" cy="13" r="1.3" fill="#2a5a85"/></svg>
<svg style="left:453px;top:31px" width="16" height="16" viewBox="0 0 16 16"><rect x="1" y="1" width="9" height="13" fill="#a9cbe6" stroke="#2a5a85" stroke-width="1"/><path d="M13 1V15" stroke="#888" stroke-dasharray="1.5 1.5"/></svg>
<svg style="left:474px;top:36px" width="7" height="5" viewBox="0 0 7 5"><path d="M0.5 0.8L3.5 3.8L6.5 0.8" stroke="#999" fill="none" stroke-width="0.8"/></svg>
<div class="a" style="left:482px;top:29px;width:20px;height:20px;background:#bde3f7;border:1px solid #6cc0ee"></div>
<svg style="left:486px;top:32px" width="13" height="15" viewBox="0 0 13 15"><path d="M2 1V12L5 9L7.5 14L9 13L6.5 8.5H10.5Z" fill="none" stroke="#8a9aaa" stroke-width="1"/></svg>
<svg style="left:504px;top:30px" width="16" height="17" viewBox="0 0 16 17"><path d="M2 13L5 6L11 1L14 3L8 9Z" fill="none" stroke="#2a5a85" stroke-width="1.1"/><path d="M1 15H14" stroke="#888" stroke-width="1.4"/></svg>
<svg style="left:524px;top:30px" width="17" height="17" viewBox="0 0 17 17"><path d="M4 3L14 4L12 14L2 13Z" fill="none" stroke="#2a5a85" stroke-width="1.1"/><circle cx="4" cy="3" r="1.3" fill="#2a5a85"/><circle cx="14" cy="4" r="1.3" fill="#2a5a85"/><circle cx="12" cy="14" r="1.3" fill="#2a5a85"/><circle cx="2" cy="13" r="1.3" fill="#2a5a85"/><path d="M1 16L16 1" stroke="#777" stroke-width="0.9"/></svg>
<svg style="left:544px;top:31px" width="16" height="16" viewBox="0 0 16 16"><path d="M1 11L11 1L15 5L5 15Z" fill="none" stroke="#2a5a85" stroke-width="1.1"/><path d="M4 8L6 10M6 6L8 8M8 4L10 6" stroke="#2a5a85" stroke-width="0.8"/></svg>
<svg style="left:1583px;top:30px" width="16" height="16" viewBox="0 0 16 16"><path d="M1 4H4L5.5 2H10.5L12 4H15V14H1Z" fill="none" stroke="#4a7aa0" stroke-width="1.1"/><circle cx="8" cy="9" r="3" fill="none" stroke="#4a7aa0" stroke-width="1.1"/></svg>

<div id="tree" class="a">
<div class="a" style="left:6px;top:150px;width:291px;height:15px;background:#d5d5d5;border:1px solid #cacaca"></div>
<div class="tr" style="top:0.0px"><svg style="left:8.5px;top:4px" width="9" height="6" viewBox="0 0 9 6"><path d="M0.7 0.7L4.5 4.7L8.3 0.7" stroke="#555" stroke-width="0.9" fill="none"/></svg><svg style="left:20px;top:2px" width="12" height="12" viewBox="0 0 12 12"><path d="M0.5 2.5V9.5H10.5V3.5H5L4 1.5H0.5Z" fill="#fbfbfb" stroke="#b5b5b5" stroke-width="0.9"/></svg><div class="t" style="left:33px;">Topography</div></div>
<div class="tr" style="top:15.04px"><svg style="left:23.0px;top:3px" width="6" height="9" viewBox="0 0 6 9"><path d="M0.7 0.7L4.7 4.5L0.7 8.3" stroke="#555" stroke-width="0.9" fill="none"/></svg><svg style="left:33px;top:2px" width="12" height="12" viewBox="0 0 12 12"><path d="M0.5 9Q2 5 5 5L7 2L10.5 6L10 9Q5 11 0.5 9Z" fill="#2f6c9a"/><path d="M4 6L7 2.5L9.5 6Z" fill="#4aa56a"/></svg><div class="t" style="left:45.5px;">Topography</div></div>
<div class="tr" style="top:30.08px"><svg style="left:23.0px;top:3px" width="6" height="9" viewBox="0 0 6 9"><path d="M0.7 0.7L4.7 4.5L0.7 8.3" stroke="#555" stroke-width="0.9" fill="none"/></svg><svg style="left:33px;top:2px" width="12" height="12" viewBox="0 0 12 12"><path d="M0.5 2.5V9.5H10.5V3.5H5L4 1.5H0.5Z" fill="#fbfbfb" stroke="#b5b5b5" stroke-width="0.9"/></svg><div class="t" style="left:45.5px;">Draped GIS Objects</div></div>
<div class="tr" style="top:45.12px"><svg style="left:8.5px;top:4px" width="9" height="6" viewBox="0 0 9 6"><path d="M0.7 0.7L4.5 4.7L8.3 0.7" stroke="#555" stroke-width="0.9" fill="none"/></svg><svg style="left:20px;top:2px" width="12" height="12" viewBox="0 0 12 12"><path d="M0.5 2.5V9.5H10.5V3.5H5L4 1.5H0.5Z" fill="#fbfbfb" stroke="#b5b5b5" stroke-width="0.9"/></svg><div class="t" style="left:33px;">GIS Data, Maps and Photos</div></div>
<div class="tr" style="top:60.16px"><svg style="left:21.0px;top:4px" width="9" height="6" viewBox="0 0 9 6"><path d="M0.7 0.7L4.5 4.7L8.3 0.7" stroke="#555" stroke-width="0.9" fill="none"/></svg><svg style="left:33px;top:2px" width="12" height="12" viewBox="0 0 12 12"><path d="M0.5 2.5V9.5H10.5V3.5H5L4 1.5H0.5Z" fill="#fbfbfb" stroke="#b5b5b5" stroke-width="0.9"/></svg><div class="t" style="left:45.5px;">GIS Lines Geology</div></div>
<div class="tr" style="top:75.2px"><svg style="left:45.5px;top:2px" width="12" height="12" viewBox="0 0 12 12"><rect x="0.5" y="1" width="9" height="8" fill="#f3e6c8" stroke="#aaa" stroke-width="0.6"/><path d="M1 3Q4 1 9 3V5Q5 3 1 6Z" fill="#e85a5a"/><circle cx="8.5" cy="8.5" r="2.2" fill="#2a6aa8"/></svg><div class="t" style="left:58px;">Alluvium (Southeast Valley)</div></div>
<div class="tr" style="top:90.24px"><svg style="left:33px;top:2px" width="12" height="12" viewBox="0 0 12 12"><rect x="0.5" y="1.5" width="10" height="8" fill="#cfdde4" stroke="#999" stroke-width="0.6"/><path d="M1 9L4 5L7 8L10 5V9Z" fill="#86c0a0"/><circle cx="9" cy="9" r="2.2" fill="#2a6aa8"/></svg><div class="t" style="left:45.5px;">gmap4</div></div>
<div class="tr" style="top:105.28px"><svg style="left:8.5px;top:4px" width="9" height="6" viewBox="0 0 9 6"><path d="M0.7 0.7L4.5 4.7L8.3 0.7" stroke="#555" stroke-width="0.9" fill="none"/></svg><svg style="left:20px;top:2px" width="12" height="12" viewBox="0 0 12 12"><path d="M0.5 2.5V9.5H10.5V3.5H5L4 1.5H0.5Z" fill="#fbfbfb" stroke="#b5b5b5" stroke-width="0.9"/></svg><div class="t" style="left:33px;">Borehole Data</div></div>
<div class="tr" style="top:120.32px"><svg style="left:21.0px;top:4px" width="9" height="6" viewBox="0 0 9 6"><path d="M0.7 0.7L4.5 4.7L8.3 0.7" stroke="#555" stroke-width="0.9" fill="none"/></svg><svg style="left:33px;top:2px" width="12" height="12" viewBox="0 0 12 12"><rect x="0.5" y="1" width="2.3" height="9" fill="#2a6aa8"/><rect x="3.5" y="1" width="2.3" height="9" fill="#e8c840"/><rect x="6.5" y="1" width="2.3" height="9" fill="#2a6aa8"/><rect x="9.2" y="1" width="1.8" height="9" fill="#e8c840"/><rect x="0.5" y="5" width="10.5" height="1.5" fill="#5ab0e0"/></svg><div class="t" style="left:45.5px;">Historical Boreholes</div></div>
<div class="tr" style="top:135.36px"><svg style="left:35.5px;top:3px" width="6" height="9" viewBox="0 0 6 9"><path d="M0.7 0.7L4.7 4.5L0.7 8.3" stroke="#555" stroke-width="0.9" fill="none"/></svg><svg style="left:45.5px;top:2px" width="12" height="12" viewBox="0 0 12 12"><rect x="0.5" y="0.5" width="10" height="10" fill="#fff" stroke="#888" stroke-width="0.7"/><path d="M0.5 3.5H10.5M0.5 6.5H10.5M4 0.5V10.5M7 0.5V10.5" stroke="#999" stroke-width="0.6"/><rect x="5" y="7" width="5.5" height="3.5" fill="#e8c840"/><rect x="1" y="7" width="3.5" height="3.5" fill="#2a6aa8"/></svg><div class="t" style="left:58px;">collar</div></div>
<div class="tr" style="top:150.4px"><svg style="left:45.5px;top:2px" width="12" height="12" viewBox="0 0 12 12"><rect x="0.5" y="0.5" width="10" height="10" fill="#fff" stroke="#888" stroke-width="0.7"/><path d="M0.5 3.5H10.5M0.5 6.5H10.5M4 0.5V10.5M7 0.5V10.5" stroke="#999" stroke-width="0.6"/><rect x="5" y="7" width="5.5" height="3.5" fill="#e8c840"/><rect x="1" y="7" width="3.5" height="3.5" fill="#2a6aa8"/></svg><div class="t" style="left:58px;font-weight:bold;color:#222;letter-spacing:-0.6px;">survey</div></div>
<div class="tr" style="top:165.44px"><svg style="left:45.5px;top:2px" width="12" height="12" viewBox="0 0 12 12"><path d="M0.5 10L5 1M3 10L7 2M6 10L8 2.5M10 10L9 2" stroke="#333" stroke-width="0.8" fill="none"/><path d="M1 5Q5 1 10 1" stroke="#333" stroke-width="0.7" fill="none"/></svg><div class="t" style="left:58px;font-weight:bold;color:#222;letter-spacing:-0.6px;">traces</div></div>
<div class="tr" style="top:180.48px"><svg style="left:45.5px;top:2px" width="12" height="12" viewBox="0 0 12 12"><path d="M3 1Q0 1 1 5Q0 9 3 10" stroke="#4a90c0" stroke-width="0.8" fill="none"/><rect x="5" y="1" width="4.5" height="2.5" fill="#e85050"/><rect x="6" y="4" width="4.5" height="2.5" fill="#e85050"/><rect x="5" y="7" width="4.5" height="3" fill="#e85050"/></svg><div class="t" style="left:58px;">graphs</div></div>
<div class="tr" style="top:195.52px"><svg style="left:35.5px;top:3px" width="6" height="9" viewBox="0 0 6 9"><path d="M0.7 0.7L4.7 4.5L0.7 8.3" stroke="#555" stroke-width="0.9" fill="none"/></svg><svg style="left:45.5px;top:2px" width="12" height="12" viewBox="0 0 12 12"><rect x="0.5" y="0.5" width="10" height="10" fill="#fff" stroke="#888" stroke-width="0.7"/><path d="M0.5 3.5H10.5M0.5 6.5H10.5M4 0.5V10.5M7 0.5V10.5" stroke="#999" stroke-width="0.6"/><rect x="5" y="7" width="5.5" height="3.5" fill="#e8c840"/><rect x="1" y="7" width="3.5" height="3.5" fill="#2a6aa8"/></svg><div class="t" style="left:58px;">Field_Geological_Descriptions</div></div>
<div class="tr" style="top:210.56px"><svg style="left:45.5px;top:2px" width="12" height="12" viewBox="0 0 12 12"><path d="M0.5 2.5V9.5H10.5V3.5H5L4 1.5H0.5Z" fill="#fbfbfb" stroke="#b5b5b5" stroke-width="0.9"/></svg><div class="t" style="left:58px;">Composites</div></div>
<div class="tr" style="top:225.6px"><svg style="left:21.0px;top:4px" width="9" height="6" viewBox="0 0 9 6"><path d="M0.7 0.7L4.5 4.7L8.3 0.7" stroke="#555" stroke-width="0.9" fill="none"/></svg><svg style="left:33px;top:2px" width="12" height="12" viewBox="0 0 12 12"><rect x="0.5" y="1" width="2.3" height="9" fill="#2a6aa8"/><rect x="3.5" y="1" width="2.3" height="9" fill="#e8c840"/><rect x="6.5" y="1" width="2.3" height="9" fill="#2a6aa8"/><rect x="9.2" y="1" width="1.8" height="9" fill="#e8c840"/><circle cx="2.5" cy="8.5" r="2.5" fill="#222"/><circle cx="2.9" cy="8.5" r="1.3" fill="#f5f5f5"/></svg><div class="t" style="left:45.5px;">Phase 1 Boreholes</div></div>
<div class="tr" style="top:240.64px"><svg style="left:35.5px;top:3px" width="6" height="9" viewBox="0 0 6 9"><path d="M0.7 0.7L4.7 4.5L0.7 8.3" stroke="#555" stroke-width="0.9" fill="none"/></svg><svg style="left:45.5px;top:2px" width="12" height="12" viewBox="0 0 12 12"><rect x="0.5" y="0.5" width="10" height="10" fill="#fff" stroke="#888" stroke-width="0.7"/><path d="M0.5 3.5H10.5M0.5 6.5H10.5M4 0.5V10.5M7 0.5V10.5" stroke="#999" stroke-width="0.6"/><rect x="5" y="7" width="5.5" height="3.5" fill="#e8c840"/><circle cx="2.5" cy="8.5" r="2.5" fill="#222"/><circle cx="2.9" cy="8.5" r="1.3" fill="#f5f5f5"/></svg><div class="t" style="left:58px;">collar</div></div>
<div class="tr" style="top:255.68px"><svg style="left:45.5px;top:2px" width="12" height="12" viewBox="0 0 12 12"><rect x="0.5" y="0.5" width="10" height="10" fill="#fff" stroke="#888" stroke-width="0.7"/><path d="M0.5 3.5H10.5M0.5 6.5H10.5M4 0.5V10.5M7 0.5V10.5" stroke="#999" stroke-width="0.6"/><rect x="5" y="7" width="5.5" height="3.5" fill="#e8c840"/><circle cx="2.5" cy="8.5" r="2.5" fill="#222"/><circle cx="2.9" cy="8.5" r="1.3" fill="#f5f5f5"/></svg><div class="t" style="left:58px;font-weight:bold;color:#222;letter-spacing:-0.6px;">survey</div></div>
<div class="tr" style="top:270.72px"><svg style="left:45.5px;top:2px" width="12" height="12" viewBox="0 0 12 12"><path d="M3 10L6 1M5 10L8 2M10 10L9 2" stroke="#333" stroke-width="0.8" fill="none"/><circle cx="2.5" cy="8" r="2.5" fill="#222"/><circle cx="2.9" cy="8" r="1.3" fill="#f5f5f5"/></svg><div class="t" style="left:58px;">traces</div></div>
<div class="tr" style="top:285.76px"><svg style="left:45.5px;top:2px" width="12" height="12" viewBox="0 0 12 12"><rect x="5" y="1" width="4.5" height="2.5" fill="#e85050"/><rect x="6" y="4" width="4.5" height="2.5" fill="#e85050"/><rect x="5" y="7" width="4.5" height="3" fill="#e85050"/><circle cx="2.5" cy="8" r="2.5" fill="#222"/><circle cx="2.9" cy="8" r="1.3" fill="#f5f5f5"/><path d="M3 1Q0 1 1 4" stroke="#4a90c0" stroke-width="0.8" fill="none"/></svg><div class="t" style="left:58px;">graphs</div></div>
<div class="tr" style="top:300.8px"><svg style="left:35.5px;top:3px" width="6" height="9" viewBox="0 0 6 9"><path d="M0.7 0.7L4.7 4.5L0.7 8.3" stroke="#555" stroke-width="0.9" fill="none"/></svg><svg style="left:45.5px;top:2px" width="12" height="12" viewBox="0 0 12 12"><rect x="0.5" y="0.5" width="10" height="10" fill="#fff" stroke="#888" stroke-width="0.7"/><path d="M0.5 3.5H10.5M0.5 6.5H10.5M4 0.5V10.5M7 0.5V10.5" stroke="#999" stroke-width="0.6"/><rect x="5" y="7" width="5.5" height="3.5" fill="#e8c840"/><circle cx="2.5" cy="8.5" r="2.5" fill="#222"/><circle cx="2.9" cy="8.5" r="1.3" fill="#f5f5f5"/></svg><div class="t" style="left:58px;">geol_phase</div></div>
<div class="tr" style="top:315.84px"><svg style="left:35.5px;top:3px" width="6" height="9" viewBox="0 0 6 9"><path d="M0.7 0.7L4.7 4.5L0.7 8.3" stroke="#555" stroke-width="0.9" fill="none"/></svg><svg style="left:45.5px;top:2px" width="12" height="12" viewBox="0 0 12 12"><rect x="0.5" y="0.5" width="10" height="10" fill="#fff" stroke="#888" stroke-width="0.7"/><path d="M0.5 3.5H10.5M0.5 6.5H10.5M4 0.5V10.5M7 0.5V10.5" stroke="#999" stroke-width="0.6"/><rect x="5" y="7" width="5.5" height="3.5" fill="#e8c840"/><circle cx="2.5" cy="8.5" r="2.5" fill="#222"/><circle cx="2.9" cy="8.5" r="1.3" fill="#f5f5f5"/></svg><div class="t" style="left:58px;">weathering_phase</div></div>
<div class="tr" style="top:330.88px"><svg style="left:45.5px;top:2px" width="12" height="12" viewBox="0 0 12 12"><path d="M0.5 2.5V9.5H10.5V3.5H5L4 1.5H0.5Z" fill="#fbfbfb" stroke="#b5b5b5" stroke-width="0.9"/></svg><div class="t" style="left:58px;">Composites</div></div>
<div class="tr" style="top:345.92px"><svg style="left:21.0px;top:4px" width="9" height="6" viewBox="0 0 9 6"><path d="M0.7 0.7L4.5 4.7L8.3 0.7" stroke="#555" stroke-width="0.9" fill="none"/></svg><svg style="left:33px;top:2px" width="12" height="12" viewBox="0 0 12 12"><rect x="0.5" y="1" width="2.3" height="9" fill="#2a6aa8"/><rect x="3.5" y="1" width="2.3" height="9" fill="#e8c840"/><rect x="6.5" y="1" width="2.3" height="9" fill="#2a6aa8"/><rect x="9.2" y="1" width="1.8" height="9" fill="#e8c840"/><rect x="0.5" y="5" width="10.5" height="1.5" fill="#5ab0e0"/></svg><div class="t" style="left:45.5px;">Phase 2 Boreholes</div></div>
<div class="tr" style="top:360.96px"><svg style="left:35.5px;top:3px" width="6" height="9" viewBox="0 0 6 9"><path d="M0.7 0.7L4.7 4.5L0.7 8.3" stroke="#555" stroke-width="0.9" fill="none"/></svg><svg style="left:45.5px;top:2px" width="12" height="12" viewBox="0 0 12 12"><rect x="0.5" y="0.5" width="10" height="10" fill="#fff" stroke="#888" stroke-width="0.7"/><path d="M0.5 3.5H10.5M0.5 6.5H10.5M4 0.5V10.5M7 0.5V10.5" stroke="#999" stroke-width="0.6"/><circle cx="8.5" cy="8.5" r="2.5" fill="#1f5a95"/><path d="M8.5 7.5V10" stroke="#fff" stroke-width="0.8"/></svg><div class="t" style="left:58px;">collar</div></div>
<div class="tr" style="top:376.0px"><svg style="left:45.5px;top:2px" width="12" height="12" viewBox="0 0 12 12"><path d="M0.5 10L5 1M3 10L7 2M6 10L8 2.5M10 10L9 2" stroke="#333" stroke-width="0.8" fill="none"/><path d="M1 5Q5 1 10 1" stroke="#333" stroke-width="0.7" fill="none"/></svg><div class="t" style="left:58px;font-weight:bold;color:#222;letter-spacing:-0.6px;">traces</div></div>
<div class="tr" style="top:391.04px"><svg style="left:45.5px;top:2px" width="12" height="12" viewBox="0 0 12 12"><path d="M3 1Q0 1 1 5Q0 9 3 10" stroke="#4a90c0" stroke-width="0.8" fill="none"/><rect x="5" y="1" width="4.5" height="2.5" fill="#e85050"/><rect x="6" y="4" width="4.5" height="2.5" fill="#e85050"/><rect x="5" y="7" width="4.5" height="3" fill="#e85050"/></svg><div class="t" style="left:58px;">graphs</div></div>
<div class="tr" style="top:406.08px"><svg style="left:35.5px;top:3px" width="6" height="9" viewBox="0 0 6 9"><path d="M0.7 0.7L4.7 4.5L0.7 8.3" stroke="#555" stroke-width="0.9" fill="none"/></svg><svg style="left:45.5px;top:2px" width="12" height="12" viewBox="0 0 12 12"><rect x="0.5" y="0.5" width="10" height="10" fill="#fff" stroke="#888" stroke-width="0.7"/><path d="M0.5 3.5H10.5M0.5 6.5H10.5M4 0.5V10.5M7 0.5V10.5" stroke="#999" stroke-width="0.6"/><circle cx="8.5" cy="8.5" r="2.5" fill="#1f5a95"/><path d="M8.5 7.5V10" stroke="#fff" stroke-width="0.8"/></svg><div class="t" style="left:58px;">geol_phase</div></div>
<div class="tr" style="top:421.12px"><svg style="left:35.5px;top:3px" width="6" height="9" viewBox="0 0 6 9"><path d="M0.7 0.7L4.7 4.5L0.7 8.3" stroke="#555" stroke-width="0.9" fill="none"/></svg><svg style="left:45.5px;top:2px" width="12" height="12" viewBox="0 0 12 12"><rect x="0.5" y="0.5" width="10" height="10" fill="#fff" stroke="#888" stroke-width="0.7"/><path d="M0.5 3.5H10.5M0.5 6.5H10.5M4 0.5V10.5M7 0.5V10.5" stroke="#999" stroke-width="0.6"/><circle cx="8.5" cy="8.5" r="2.5" fill="#1f5a95"/><path d="M8.5 7.5V10" stroke="#fff" stroke-width="0.8"/></svg><div class="t" style="left:58px;">weathering_phase</div></div>
<div class="tr" style="top:436.16px"><svg style="left:45.5px;top:2px" width="12" height="12" viewBox="0 0 12 12"><path d="M0.5 2.5V9.5H10.5V3.5H5L4 1.5H0.5Z" fill="#fbfbfb" stroke="#b5b5b5" stroke-width="0.9"/></svg><div class="t" style="left:58px;">Composites</div></div>
<div class="tr" style="top:451.2px"><svg style="left:33px;top:2px" width="12" height="12" viewBox="0 0 12 12"><path d="M0.5 2.5V9.5H10.5V3.5H5L4 1.5H0.5Z" fill="#fbfbfb" stroke="#b5b5b5" stroke-width="0.9"/></svg><div class="t" style="left:45.5px;">Planned Boreholes</div></div>
<div class="tr" style="top:466.24px"><svg style="left:33px;top:2px" width="12" height="12" viewBox="0 0 12 12"><path d="M0.5 2.5V9.5H10.5V3.5H5L4 1.5H0.5Z" fill="#fbfbfb" stroke="#b5b5b5" stroke-width="0.9"/></svg><div class="t" style="left:45.5px;">Borehole Correlation</div></div>
<div class="tr" style="top:481.28px"><svg style="left:8.5px;top:4px" width="9" height="6" viewBox="0 0 9 6"><path d="M0.7 0.7L4.5 4.7L8.3 0.7" stroke="#555" stroke-width="0.9" fill="none"/></svg><svg style="left:20px;top:2px" width="12" height="12" viewBox="0 0 12 12"><path d="M0.5 2.5V9.5H10.5V3.5H5L4 1.5H0.5Z" fill="#fbfbfb" stroke="#b5b5b5" stroke-width="0.9"/></svg><div class="t" style="left:33px;">Designs</div></div>
<div class="tr" style="top:496.32px"><svg style="left:23.0px;top:3px" width="6" height="9" viewBox="0 0 6 9"><path d="M0.7 0.7L4.7 4.5L0.7 8.3" stroke="#555" stroke-width="0.9" fill="none"/></svg><svg style="left:33px;top:2px" width="12" height="12" viewBox="0 0 12 12"><path d="M0.5 2.5V9.5H10.5V3.5H5L4 1.5H0.5Z" fill="#fbfbfb" stroke="#b5b5b5" stroke-width="0.9"/></svg><div class="t" style="left:45.5px;">Option A (Superseded)</div></div>
<div class="tr" style="top:511.36px"><svg style="left:23.0px;top:3px" width="6" height="9" viewBox="0 0 6 9"><path d="M0.7 0.7L4.7 4.5L0.7 8.3" stroke="#555" stroke-width="0.9" fill="none"/></svg><svg style="left:33px;top:2px" width="12" height="12" viewBox="0 0 12 12"><path d="M0.5 2.5V9.5H10.5V3.5H5L4 1.5H0.5Z" fill="#fbfbfb" stroke="#b5b5b5" stroke-width="0.9"/></svg><div class="t" style="left:45.5px;">Option B (Strings)</div></div>
<div class="tr" style="top:526.4px"><svg style="left:21.0px;top:4px" width="9" height="6" viewBox="0 0 9 6"><path d="M0.7 0.7L4.5 4.7L8.3 0.7" stroke="#555" stroke-width="0.9" fill="none"/></svg><svg style="left:33px;top:2px" width="12" height="12" viewBox="0 0 12 12"><path d="M1 3L5 1L10 3V9L5 11L1 9Z" fill="#6a6a6a"/><path d="M1 3L5 5L10 3M5 5V11" stroke="#ddd" stroke-width="0.6" fill="none"/><path d="M1 6L5 8L10 6" stroke="#ddd" stroke-width="0.6" fill="none"/></svg><div class="t" style="left:45.5px;">OptB_Corridor_Detailed</div></div>
<div class="tr" style="top:541.44px"><svg style="left:45.5px;top:2px" width="12" height="12" viewBox="0 0 12 12"><rect x="0.5" y="0.5" width="10" height="10" fill="#fff" stroke="#aaa" stroke-width="0.7"/><circle cx="3" cy="3" r="1.1" fill="#e03030"/><circle cx="3" cy="5.5" r="1.1" fill="#30a050"/><circle cx="3" cy="8" r="1.1" fill="#3070d0"/><path d="M5 3H9M5 5.5H9M5 8H9" stroke="#bbb" stroke-width="0.8"/></svg><div class="t" style="left:58px;">Layer colour</div></div>
<div class="tr" style="top:556.48px"><svg style="left:33.5px;top:4px" width="9" height="6" viewBox="0 0 9 6"><path d="M0.7 0.7L4.5 4.7L8.3 0.7" stroke="#555" stroke-width="0.9" fill="none"/></svg><svg style="left:45.5px;top:2px" width="12" height="12" viewBox="0 0 12 12"><path d="M1 3L5.5 1L10 3V9L5.5 11L1 9Z" fill="#3f7fb0"/><path d="M1 3L5.5 5L10 3M5.5 5V11" stroke="#cde" stroke-width="0.6" fill="none"/><path d="M1 6L5.5 8L10 6" stroke="#9bc" stroke-width="0.5" fill="none"/></svg><div class="t" style="left:58px;">Design1_Corridor</div></div>
<div class="tr" style="top:571.52px"><svg style="left:48.5px;top:3px" width="6" height="9" viewBox="0 0 6 9"><path d="M0.7 0.7L4.7 4.5L0.7 8.3" stroke="#555" stroke-width="0.9" fill="none"/></svg><svg style="left:58px;top:2px" width="12" height="12" viewBox="0 0 12 12"><path d="M1 3L5.5 1L10 3V9L5.5 11L1 9Z" fill="#3f8fc0"/><path d="M1 3L5.5 5L10 3M5.5 5V11" stroke="#cde" stroke-width="0.6" fill="none"/><rect x="7" y="7" width="4" height="4" fill="#f0a040"/></svg><div class="t" style="left:71px;font-weight:bold;color:#222;letter-spacing:-0.6px;">Design1_Corridor</div></div>
<div class="tr" style="top:586.56px"><svg style="left:21.0px;top:4px" width="9" height="6" viewBox="0 0 9 6"><path d="M0.7 0.7L4.5 4.7L8.3 0.7" stroke="#555" stroke-width="0.9" fill="none"/></svg><svg style="left:33px;top:2px" width="12" height="12" viewBox="0 0 12 12"><path d="M1 3L5 1L10 3V9L5 11L1 9Z" fill="#6a6a6a"/><path d="M1 3L5 5L10 3M5 5V11" stroke="#ddd" stroke-width="0.6" fill="none"/><path d="M1 6L5 8L10 6" stroke="#ddd" stroke-width="0.6" fill="none"/></svg><div class="t" style="left:45.5px;">OptB_Detailed_Design</div></div>
<div class="tr" style="top:601.6px"><svg style="left:45.5px;top:2px" width="12" height="12" viewBox="0 0 12 12"><rect x="0.5" y="0.5" width="10" height="10" fill="#fff" stroke="#aaa" stroke-width="0.7"/><circle cx="3" cy="3" r="1.1" fill="#e03030"/><circle cx="3" cy="5.5" r="1.1" fill="#30a050"/><circle cx="3" cy="8" r="1.1" fill="#3070d0"/><path d="M5 3H9M5 5.5H9M5 8H9" stroke="#bbb" stroke-width="0.8"/></svg><div class="t" style="left:58px;">Layer colour</div></div>
<div class="tr" style="top:616.64px"><svg style="left:33.5px;top:4px" width="9" height="6" viewBox="0 0 9 6"><path d="M0.7 0.7L4.5 4.7L8.3 0.7" stroke="#555" stroke-width="0.9" fill="none"/></svg><svg style="left:45.5px;top:2px" width="12" height="12" viewBox="0 0 12 12"><path d="M1 3L5.5 1L10 3V9L5.5 11L1 9Z" fill="#3f7fb0"/><path d="M1 3L5.5 5L10 3M5.5 5V11" stroke="#cde" stroke-width="0.6" fill="none"/><path d="M1 6L5.5 8L10 6" stroke="#9bc" stroke-width="0.5" fill="none"/></svg><div class="t" style="left:58px;">Design1_mountlandscape_fbx</div></div>
<div class="tr" style="top:631.68px"><svg style="left:46.5px;top:4px" width="9" height="6" viewBox="0 0 9 6"><path d="M0.7 0.7L4.5 4.7L8.3 0.7" stroke="#555" stroke-width="0.9" fill="none"/></svg><svg style="left:58px;top:2px" width="12" height="12" viewBox="0 0 12 12"><path d="M1 3L5.5 1L10 3V9L5.5 11L1 9Z" fill="#3f8fc0"/><path d="M1 3L5.5 5L10 3M5.5 5V11" stroke="#cde" stroke-width="0.6" fill="none"/><rect x="7" y="7" width="4" height="4" fill="#f0a040"/></svg><div class="t" style="left:71px;">Design1_mountlandscape_fbx</div></div>
<div class="tr" style="top:646.72px"><svg style="left:70.5px;top:2px" width="12" height="12" viewBox="0 0 12 12"><path d="M2 3L6 1L10 5L8 10L2 9L1 6Z" fill="none" stroke="#3aa070" stroke-width="0.9"/></svg><div class="t" style="left:83.5px;">Design1_mountlandscape_fbx border edges</div></div>
<div class="tr" style="top:661.76px"><svg style="left:70.5px;top:2px" width="12" height="12" viewBox="0 0 12 12"><path d="M1 3L10 1M1 3L6 10" fill="none" stroke="#3aa070" stroke-width="0.9"/></svg><div class="t" style="left:83.5px;">Design1_mountlandscape_fbx non-manifold edges</div></div>
<div class="tr" style="top:676.8px"><svg style="left:70.5px;top:2px" width="12" height="12" viewBox="0 0 12 12"><path d="M2 4L6 1L10 5L8 10L2 9Z" fill="none" stroke="#3aa070" stroke-width="0.9"/><path d="M1 9L5 3L9 9Z" fill="#e85050" opacity="0.8"/></svg><div class="t" style="left:83.5px;">Design1_mountlandscape_fbx self intersections</div></div>
<div class="tr" style="top:691.84px"><svg style="left:21.0px;top:4px" width="9" height="6" viewBox="0 0 9 6"><path d="M0.7 0.7L4.5 4.7L8.3 0.7" stroke="#555" stroke-width="0.9" fill="none"/></svg><svg style="left:33px;top:2px" width="12" height="12" viewBox="0 0 12 12"><path d="M1 3L5 1L10 3V9L5 11L1 9Z" fill="#6a6a6a"/><path d="M1 3L5 5L10 3M5 5V11" stroke="#ddd" stroke-width="0.6" fill="none"/><path d="M1 6L5 8L10 6" stroke="#ddd" stroke-width="0.6" fill="none"/></svg><div class="t" style="left:45.5px;">OptB_Earthworks_Cut_Fill</div><svg style="left:262px;top:3px" width="11" height="9" viewBox="0 0 11 9"><path d="M1 1H10V6H5L2.5 8V6H1Z" fill="none" stroke="#4a90c0" stroke-width="0.9"/></svg></div>
<div class="tr" style="top:706.88px"><svg style="left:45.5px;top:2px" width="12" height="12" viewBox="0 0 12 12"><rect x="0.5" y="0.5" width="10" height="10" fill="#fff" stroke="#aaa" stroke-width="0.7"/><circle cx="3" cy="3" r="1.1" fill="#e03030"/><circle cx="3" cy="5.5" r="1.1" fill="#30a050"/><circle cx="3" cy="8" r="1.1" fill="#3070d0"/><path d="M5 3H9M5 5.5H9M5 8H9" stroke="#bbb" stroke-width="0.8"/></svg><div class="t" style="left:58px;">Layer colour</div></div>
<div class="tr" style="top:721.92px"><svg style="left:33.5px;top:4px" width="9" height="6" viewBox="0 0 9 6"><path d="M0.7 0.7L4.5 4.7L8.3 0.7" stroke="#555" stroke-width="0.9" fill="none"/></svg><svg style="left:45.5px;top:2px" width="12" height="12" viewBox="0 0 12 12"><path d="M1 3L5.5 1L10 3V9L5.5 11L1 9Z" fill="#3f7fb0"/><path d="M1 3L5.5 5L10 3M5.5 5V11" stroke="#cde" stroke-width="0.6" fill="none"/><path d="M1 6L5.5 8L10 6" stroke="#9bc" stroke-width="0.5" fill="none"/></svg><div class="t" style="left:58px;">Earthworks_Cut_Fill</div></div>
<div class="tr" style="top:736.96px"><svg style="left:48.5px;top:3px" width="6" height="9" viewBox="0 0 6 9"><path d="M0.7 0.7L4.7 4.5L0.7 8.3" stroke="#555" stroke-width="0.9" fill="none"/></svg><svg style="left:58px;top:2px" width="12" height="12" viewBox="0 0 12 12"><path d="M1 3L5.5 1L10 3V9L5.5 11L1 9Z" fill="#3f7fb0"/><path d="M1 3L5.5 5L10 3M5.5 5V11" stroke="#cde" stroke-width="0.6" fill="none"/><path d="M1 6L5.5 8L10 6" stroke="#9bc" stroke-width="0.5" fill="none"/></svg><div class="t" style="left:71px;">Earthworks_Cut_Fill</div></div>
<div class="tr" style="top:752.0px"><svg style="left:21.0px;top:4px" width="9" height="6" viewBox="0 0 9 6"><path d="M0.7 0.7L4.5 4.7L8.3 0.7" stroke="#555" stroke-width="0.9" fill="none"/></svg><svg style="left:33px;top:2px" width="12" height="12" viewBox="0 0 12 12"><path d="M1 3L5 1L10 3V9L5 11L1 9Z" fill="#6a6a6a"/><path d="M1 3L5 5L10 3M5 5V11" stroke="#ddd" stroke-width="0.6" fill="none"/><path d="M1 6L5 8L10 6" stroke="#ddd" stroke-width="0.6" fill="none"/></svg><div class="t" style="left:45.5px;">OptB_Tunnel_Design</div><svg style="left:262px;top:3px" width="11" height="9" viewBox="0 0 11 9"><path d="M1 1H10V6H5L2.5 8V6H1Z" fill="none" stroke="#4a90c0" stroke-width="0.9"/></svg></div>
<div class="tr" style="top:767.04px"><svg style="left:45.5px;top:2px" width="12" height="12" viewBox="0 0 12 12"><rect x="0.5" y="0.5" width="10" height="10" fill="#fff" stroke="#aaa" stroke-width="0.7"/><circle cx="3" cy="3" r="1.1" fill="#e03030"/><circle cx="3" cy="5.5" r="1.1" fill="#30a050"/><circle cx="3" cy="8" r="1.1" fill="#3070d0"/><path d="M5 3H9M5 5.5H9M5 8H9" stroke="#bbb" stroke-width="0.8"/></svg><div class="t" style="left:58px;">Layer colour</div></div>
<div class="tr" style="top:782.08px"><svg style="left:33.5px;top:4px" width="9" height="6" viewBox="0 0 9 6"><path d="M0.7 0.7L4.5 4.7L8.3 0.7" stroke="#555" stroke-width="0.9" fill="none"/></svg><svg style="left:45.5px;top:2px" width="12" height="12" viewBox="0 0 12 12"><path d="M1 3L5.5 1L10 3V9L5.5 11L1 9Z" fill="#3f7fb0"/><path d="M1 3L5.5 5L10 3M5.5 5V11" stroke="#cde" stroke-width="0.6" fill="none"/><path d="M1 6L5.5 8L10 6" stroke="#9bc" stroke-width="0.5" fill="none"/></svg><div class="t" style="left:58px;">Design1_Tunnel</div></div>
<div class="a" style="left:298px;top:0px;width:9px;height:790px;background:#fff;border-left:1px solid #e3e3e3"></div>
<div class="a" style="left:300px;top:1px;width:6px;height:289px;background:#9c9c9c;border-radius:3px"></div>
</div>
<div class="a" style="left:307px;top:27px;width:4px;height:815px;background:#f3f3f3;border-left:1px solid #dcdcdc;border-right:1px solid #dcdcdc"></div>
<div class="a" style="left:309px;top:428px;width:2px;height:14px;background:#bbb"></div>
<div class="a" style="left:311px;top:677px;width:1289px;height:180px;background:#f1f1f1"></div>
<div class="a" style="left:312px;top:680px;width:1058px;height:162px;background:#fff;border:1px solid #cdcdcd;overflow:hidden">
<div class="a" style="left:0;top:0;width:1047px;height:4px;background:#fff"></div>
<div class="a" style="left:960px;top:-2px;width:16px;height:5px;background:#bde3f7;border:1px solid #55b5ee"></div>
<div class="a" style="left:721px;top:-1px;width:11px;height:3px;background:#8aaeb8"></div>
<div class="br" style="top:3.5px;background:#f5f5f5"><svg style="left:6px;top:4px" width="12" height="9" viewBox="0 0 12 9"><path d="M0.5 4.5Q6 -1.5 11.5 4.5Q6 10.5 0.5 4.5Z" fill="#1f5a85"/><circle cx="6" cy="4.5" r="2" fill="#fff"/><circle cx="6" cy="4.5" r="1.1" fill="#1f5a85"/></svg><svg style="left:31px;top:3px" width="12" height="12" viewBox="0 0 12 12"><path d="M1 4L6 1L11 3.5L10.5 10L3 11Z" fill="#5fae88"/></svg><div class="t" style="left:45px;font-style:italic;color:#1e7a35">Refined Tunnel Portal GM copy: <span style="font-style:normal;color:#aaa;letter-spacing:0">Geologicalformation: Marlborough Limestone</span></div><svg style="left:513px;top:3px" width="13" height="12" viewBox="0 0 13 12"><path d="M2 5L6 1.5L10 5L6 9Z" fill="none" stroke="#555" stroke-width="0.9"/><path d="M3 6L9 6L6 9Z" fill="#2a6aa8"/><circle cx="11" cy="9.5" r="1.3" fill="#2a6aa8"/></svg><div class="t" style="left:527px;color:#333">Lithology</div><div class="a" style="left:716px;top:3px;width:12px;height:11px;background:#c3924e"></div><div class="a" style="left:962px;top:1.5px;width:16px;height:15px;background:#bde3f7;border:1px solid #55b5ee"></div><svg style="left:965px;top:4px" width="10" height="10" viewBox="0 0 10 10"><path d="M1.5 0.5L9 5L1.5 9.5Z" fill="#1f4e6e"/></svg><svg style="left:980px;top:3px" width="12" height="12" viewBox="0 0 12 12"><path d="M1 1.5L4 3V9L1 10.5Z M5 3Q9 3.5 9.5 6Q9 8.5 5 9" fill="none" stroke="#6aa880" stroke-width="0.9"/></svg><svg style="left:997px;top:3px" width="12" height="12" viewBox="0 0 12 12"><path d="M1.5 1L10.5 6L1.5 11Z" fill="none" stroke="#2a6aa8" stroke-width="1.2"/></svg><svg style="left:492px;top:4px" width="10" height="10" viewBox="0 0 10 10"><path d="M1 1L9 9M9 1L1 9" stroke="#333" stroke-width="1"/></svg><svg style="left:700px;top:7px" width="7" height="5" viewBox="0 0 7 5"><path d="M0.5 0.8L3.5 3.8L6.5 0.8" stroke="#888" fill="none" stroke-width="0.8"/></svg><div class="a" style="left:802px;top:7px;width:146px;height:4px;background:#1f4a6a;border-radius:2px"></div><div class="a" style="left:942px;top:5px;width:8px;height:8px;background:#1f4a6a;border-radius:50%"></div><svg style="left:1030px;top:3px" width="11" height="12" viewBox="0 0 11 12"><rect x="0.5" y="0.5" width="10" height="11" fill="#f4f4f4" stroke="#bbb" stroke-width="0.7"/><circle cx="3" cy="3" r="1" fill="#e03030"/><circle cx="3" cy="6" r="1" fill="#30a050"/><circle cx="3" cy="9" r="1" fill="#3070d0"/><path d="M5 3H9M5 6H9M5 9H9" stroke="#bbb" stroke-width="0.8"/></svg></div>
<div class="br" style="top:21.0px;background:#ffffff"><svg style="left:6px;top:4px" width="12" height="9" viewBox="0 0 12 9"><path d="M0.5 4.5Q6 -1.5 11.5 4.5Q6 10.5 0.5 4.5Z" fill="#1f5a85"/><circle cx="6" cy="4.5" r="2" fill="#fff"/><circle cx="6" cy="4.5" r="1.1" fill="#1f5a85"/></svg><svg style="left:31px;top:3px" width="12" height="12" viewBox="0 0 12 12"><path d="M1 4L6 1L11 3.5L10.5 10L3 11Z" fill="#5fae88"/></svg><div class="t" style="left:45px;font-style:italic;color:#1e7a35">Refined Tunnel Portal GM copy: <span style="font-style:normal;color:#aaa;letter-spacing:0">Geologicalformation: Northland limestone</span></div><svg style="left:513px;top:3px" width="13" height="12" viewBox="0 0 13 12"><path d="M2 5L6 1.5L10 5L6 9Z" fill="none" stroke="#555" stroke-width="0.9"/><path d="M3 6L9 6L6 9Z" fill="#2a6aa8"/><circle cx="11" cy="9.5" r="1.3" fill="#2a6aa8"/></svg><div class="t" style="left:527px;color:#333">Lithology</div><div class="a" style="left:716px;top:3px;width:12px;height:11px;background:#a2b2cd"></div><div class="a" style="left:962px;top:1.5px;width:16px;height:15px;background:#bde3f7;border:1px solid #55b5ee"></div><svg style="left:965px;top:4px" width="10" height="10" viewBox="0 0 10 10"><path d="M1.5 0.5L9 5L1.5 9.5Z" fill="#1f4e6e"/></svg><svg style="left:980px;top:3px" width="12" height="12" viewBox="0 0 12 12"><path d="M1 1.5L4 3V9L1 10.5Z M5 3Q9 3.5 9.5 6Q9 8.5 5 9" fill="none" stroke="#6aa880" stroke-width="0.9"/></svg><svg style="left:997px;top:3px" width="12" height="12" viewBox="0 0 12 12"><path d="M1.5 1L10.5 6L1.5 11Z" fill="none" stroke="#2a6aa8" stroke-width="1.2"/></svg><svg style="left:492px;top:4px" width="10" height="10" viewBox="0 0 10 10"><path d="M1 1L9 9M9 1L1 9" stroke="#333" stroke-width="1"/></svg><svg style="left:700px;top:7px" width="7" height="5" viewBox="0 0 7 5"><path d="M0.5 0.8L3.5 3.8L6.5 0.8" stroke="#888" fill="none" stroke-width="0.8"/></svg><div class="a" style="left:802px;top:7px;width:146px;height:4px;background:#1f4a6a;border-radius:2px"></div><div class="a" style="left:942px;top:5px;width:8px;height:8px;background:#1f4a6a;border-radius:50%"></div><svg style="left:1030px;top:3px" width="11" height="12" viewBox="0 0 11 12"><rect x="0.5" y="0.5" width="10" height="11" fill="#f4f4f4" stroke="#bbb" stroke-width="0.7"/><circle cx="3" cy="3" r="1" fill="#e03030"/><circle cx="3" cy="6" r="1" fill="#30a050"/><circle cx="3" cy="9" r="1" fill="#3070d0"/><path d="M5 3H9M5 6H9M5 9H9" stroke="#bbb" stroke-width="0.8"/></svg></div>
<div class="br" style="top:38.5px;background:#f5f5f5"><svg style="left:6px;top:4px" width="12" height="9" viewBox="0 0 12 9"><path d="M0.5 4.5Q6 -1.5 11.5 4.5Q6 10.5 0.5 4.5Z" fill="#1f5a85"/><circle cx="6" cy="4.5" r="2" fill="#fff"/><circle cx="6" cy="4.5" r="1.1" fill="#1f5a85"/></svg><svg style="left:31px;top:3px" width="12" height="12" viewBox="0 0 12 12"><path d="M1 4L6 1L11 3.5L10.5 10L3 11Z" fill="#5fae88"/></svg><div class="t" style="left:45px;font-style:italic;color:#1e7a35">Refined Tunnel Portal GM copy: <span style="font-style:normal;color:#aaa;letter-spacing:0">Geologicalformation: Tasman Sandstone</span></div><svg style="left:513px;top:3px" width="13" height="12" viewBox="0 0 13 12"><path d="M2 5L6 1.5L10 5L6 9Z" fill="none" stroke="#555" stroke-width="0.9"/><path d="M3 6L9 6L6 9Z" fill="#2a6aa8"/><circle cx="11" cy="9.5" r="1.3" fill="#2a6aa8"/></svg><div class="t" style="left:527px;color:#333">Lithology</div><div class="a" style="left:716px;top:3px;width:12px;height:11px;background:#f6a10c"></div><div class="a" style="left:962px;top:1.5px;width:16px;height:15px;background:#bde3f7;border:1px solid #55b5ee"></div><svg style="left:965px;top:4px" width="10" height="10" viewBox="0 0 10 10"><path d="M1.5 0.5L9 5L1.5 9.5Z" fill="#1f4e6e"/></svg><svg style="left:980px;top:3px" width="12" height="12" viewBox="0 0 12 12"><path d="M1 1.5L4 3V9L1 10.5Z M5 3Q9 3.5 9.5 6Q9 8.5 5 9" fill="none" stroke="#6aa880" stroke-width="0.9"/></svg><svg style="left:997px;top:3px" width="12" height="12" viewBox="0 0 12 12"><path d="M1.5 1L10.5 6L1.5 11Z" fill="none" stroke="#2a6aa8" stroke-width="1.2"/></svg><svg style="left:492px;top:4px" width="10" height="10" viewBox="0 0 10 10"><path d="M1 1L9 9M9 1L1 9" stroke="#333" stroke-width="1"/></svg><svg style="left:700px;top:7px" width="7" height="5" viewBox="0 0 7 5"><path d="M0.5 0.8L3.5 3.8L6.5 0.8" stroke="#888" fill="none" stroke-width="0.8"/></svg><div class="a" style="left:802px;top:7px;width:146px;height:4px;background:#1f4a6a;border-radius:2px"></div><div class="a" style="left:942px;top:5px;width:8px;height:8px;background:#1f4a6a;border-radius:50%"></div><svg style="left:1030px;top:3px" width="11" height="12" viewBox="0 0 11 12"><rect x="0.5" y="0.5" width="10" height="11" fill="#f4f4f4" stroke="#bbb" stroke-width="0.7"/><circle cx="3" cy="3" r="1" fill="#e03030"/><circle cx="3" cy="6" r="1" fill="#30a050"/><circle cx="3" cy="9" r="1" fill="#3070d0"/><path d="M5 3H9M5 6H9M5 9H9" stroke="#bbb" stroke-width="0.8"/></svg></div>
<div class="br" style="top:56.0px;background:#ffffff"><svg style="left:6px;top:4px" width="12" height="9" viewBox="0 0 12 9"><path d="M0.5 4.5Q6 -1.5 11.5 4.5Q6 10.5 0.5 4.5Z" fill="#1f5a85"/><circle cx="6" cy="4.5" r="2" fill="#fff"/><circle cx="6" cy="4.5" r="1.1" fill="#1f5a85"/></svg><svg style="left:31px;top:3px" width="12" height="12" viewBox="0 0 12 12"><path d="M1 4L6 1L11 3.5L10.5 10L3 11Z" fill="#5fae88"/></svg><div class="t" style="left:45px;font-style:italic;color:#1e7a35">Refined Tunnel Portal GM copy: <span style="font-style:normal;color:#aaa;letter-spacing:0">Geologicalformation: Waikato Sandstone</span></div><svg style="left:513px;top:3px" width="13" height="12" viewBox="0 0 13 12"><path d="M2 5L6 1.5L10 5L6 9Z" fill="none" stroke="#555" stroke-width="0.9"/><path d="M3 6L9 6L6 9Z" fill="#2a6aa8"/><circle cx="11" cy="9.5" r="1.3" fill="#2a6aa8"/></svg><div class="t" style="left:527px;color:#333">Lithology</div><div class="a" style="left:716px;top:3px;width:12px;height:11px;background:#d59a9a"></div><div class="a" style="left:962px;top:1.5px;width:16px;height:15px;background:#bde3f7;border:1px solid #55b5ee"></div><svg style="left:965px;top:4px" width="10" height="10" viewBox="0 0 10 10"><path d="M1.5 0.5L9 5L1.5 9.5Z" fill="#1f4e6e"/></svg><svg style="left:980px;top:3px" width="12" height="12" viewBox="0 0 12 12"><path d="M1 1.5L4 3V9L1 10.5Z M5 3Q9 3.5 9.5 6Q9 8.5 5 9" fill="none" stroke="#6aa880" stroke-width="0.9"/></svg><svg style="left:997px;top:3px" width="12" height="12" viewBox="0 0 12 12"><path d="M1.5 1L10.5 6L1.5 11Z" fill="none" stroke="#2a6aa8" stroke-width="1.2"/></svg><svg style="left:492px;top:4px" width="10" height="10" viewBox="0 0 10 10"><path d="M1 1L9 9M9 1L1 9" stroke="#333" stroke-width="1"/></svg><svg style="left:700px;top:7px" width="7" height="5" viewBox="0 0 7 5"><path d="M0.5 0.8L3.5 3.8L6.5 0.8" stroke="#888" fill="none" stroke-width="0.8"/></svg><div class="a" style="left:802px;top:7px;width:146px;height:4px;background:#1f4a6a;border-radius:2px"></div><div class="a" style="left:942px;top:5px;width:8px;height:8px;background:#1f4a6a;border-radius:50%"></div><svg style="left:1030px;top:3px" width="11" height="12" viewBox="0 0 11 12"><rect x="0.5" y="0.5" width="10" height="11" fill="#f4f4f4" stroke="#bbb" stroke-width="0.7"/><circle cx="3" cy="3" r="1" fill="#e03030"/><circle cx="3" cy="6" r="1" fill="#30a050"/><circle cx="3" cy="9" r="1" fill="#3070d0"/><path d="M5 3H9M5 6H9M5 9H9" stroke="#bbb" stroke-width="0.8"/></svg></div>
<div class="br" style="top:73.5px;background:#f5f5f5"><svg style="left:6px;top:4px" width="12" height="9" viewBox="0 0 12 9"><path d="M0.5 4.5Q6 -1.5 11.5 4.5Q6 10.5 0.5 4.5Z" fill="#1f5a85"/><circle cx="6" cy="4.5" r="2" fill="#fff"/><circle cx="6" cy="4.5" r="1.1" fill="#1f5a85"/></svg><svg style="left:31px;top:3px" width="12" height="12" viewBox="0 0 12 12"><path d="M1 4L6 1L11 3.5L10.5 10L3 11Z" fill="#5fae88"/></svg><div class="t" style="left:45px;font-style:italic;color:#1e7a35">Refined Tunnel Portal GM copy: <span style="font-style:normal;color:#aaa;letter-spacing:0">Geologicalformation: Wellington Conglomerate</span></div><svg style="left:513px;top:3px" width="13" height="12" viewBox="0 0 13 12"><path d="M2 5L6 1.5L10 5L6 9Z" fill="none" stroke="#555" stroke-width="0.9"/><path d="M3 6L9 6L6 9Z" fill="#2a6aa8"/><circle cx="11" cy="9.5" r="1.3" fill="#2a6aa8"/></svg><div class="t" style="left:527px;color:#333">Lithology</div><div class="a" style="left:716px;top:3px;width:12px;height:11px;background:#e33838"></div><div class="a" style="left:962px;top:1.5px;width:16px;height:15px;background:#bde3f7;border:1px solid #55b5ee"></div><svg style="left:965px;top:4px" width="10" height="10" viewBox="0 0 10 10"><path d="M1.5 0.5L9 5L1.5 9.5Z" fill="#1f4e6e"/></svg><svg style="left:980px;top:3px" width="12" height="12" viewBox="0 0 12 12"><path d="M1 1.5L4 3V9L1 10.5Z M5 3Q9 3.5 9.5 6Q9 8.5 5 9" fill="none" stroke="#6aa880" stroke-width="0.9"/></svg><svg style="left:997px;top:3px" width="12" height="12" viewBox="0 0 12 12"><path d="M1.5 1L10.5 6L1.5 11Z" fill="none" stroke="#2a6aa8" stroke-width="1.2"/></svg><svg style="left:492px;top:4px" width="10" height="10" viewBox="0 0 10 10"><path d="M1 1L9 9M9 1L1 9" stroke="#333" stroke-width="1"/></svg><svg style="left:700px;top:7px" width="7" height="5" viewBox="0 0 7 5"><path d="M0.5 0.8L3.5 3.8L6.5 0.8" stroke="#888" fill="none" stroke-width="0.8"/></svg><div class="a" style="left:802px;top:7px;width:146px;height:4px;background:#1f4a6a;border-radius:2px"></div><div class="a" style="left:942px;top:5px;width:8px;height:8px;background:#1f4a6a;border-radius:50%"></div><svg style="left:1030px;top:3px" width="11" height="12" viewBox="0 0 11 12"><rect x="0.5" y="0.5" width="10" height="11" fill="#f4f4f4" stroke="#bbb" stroke-width="0.7"/><circle cx="3" cy="3" r="1" fill="#e03030"/><circle cx="3" cy="6" r="1" fill="#30a050"/><circle cx="3" cy="9" r="1" fill="#3070d0"/><path d="M5 3H9M5 6H9M5 9H9" stroke="#bbb" stroke-width="0.8"/></svg></div>
<div class="br" style="top:91.0px;background:#ffffff"><svg style="left:6px;top:4px" width="12" height="9" viewBox="0 0 12 9"><path d="M0.5 4.5Q6 -1.5 11.5 4.5Q6 10.5 0.5 4.5Z" fill="#1f5a85"/><circle cx="6" cy="4.5" r="2" fill="#fff"/><circle cx="6" cy="4.5" r="1.1" fill="#1f5a85"/></svg><svg style="left:31px;top:3px" width="12" height="12" viewBox="0 0 12 12"><path d="M1 4L6 1L11 3.5L10.5 10L3 11Z" fill="#5fae88"/></svg><div class="t" style="left:45px;font-style:italic;color:#1e7a35">Refined Tunnel Portal GM copy: <span style="font-style:normal;color:#aaa;letter-spacing:0">Tunnel Portal GM copy: Alluvium (Southeast Valley)</span></div><svg style="left:513px;top:3px" width="13" height="12" viewBox="0 0 13 12"><path d="M2 5L6 1.5L10 5L6 9Z" fill="none" stroke="#555" stroke-width="0.9"/><path d="M3 6L9 6L6 9Z" fill="#2a6aa8"/><circle cx="11" cy="9.5" r="1.3" fill="#2a6aa8"/></svg><div class="t" style="left:527px;color:#333">Lithology</div><div class="a" style="left:716px;top:3px;width:12px;height:11px;background:#fbf574"></div><div class="a" style="left:962px;top:1.5px;width:16px;height:15px;background:#bde3f7;border:1px solid #55b5ee"></div><svg style="left:965px;top:4px" width="10" height="10" viewBox="0 0 10 10"><path d="M1.5 0.5L9 5L1.5 9.5Z" fill="#1f4e6e"/></svg><svg style="left:980px;top:3px" width="12" height="12" viewBox="0 0 12 12"><path d="M1 1.5L4 3V9L1 10.5Z M5 3Q9 3.5 9.5 6Q9 8.5 5 9" fill="none" stroke="#6aa880" stroke-width="0.9"/></svg><svg style="left:997px;top:3px" width="12" height="12" viewBox="0 0 12 12"><path d="M1.5 1L10.5 6L1.5 11Z" fill="none" stroke="#2a6aa8" stroke-width="1.2"/></svg><svg style="left:492px;top:4px" width="10" height="10" viewBox="0 0 10 10"><path d="M1 1L9 9M9 1L1 9" stroke="#333" stroke-width="1"/></svg><svg style="left:700px;top:7px" width="7" height="5" viewBox="0 0 7 5"><path d="M0.5 0.8L3.5 3.8L6.5 0.8" stroke="#888" fill="none" stroke-width="0.8"/></svg><div class="a" style="left:802px;top:7px;width:146px;height:4px;background:#1f4a6a;border-radius:2px"></div><div class="a" style="left:942px;top:5px;width:8px;height:8px;background:#1f4a6a;border-radius:50%"></div><svg style="left:1030px;top:3px" width="11" height="12" viewBox="0 0 11 12"><rect x="0.5" y="0.5" width="10" height="11" fill="#f4f4f4" stroke="#bbb" stroke-width="0.7"/><circle cx="3" cy="3" r="1" fill="#e03030"/><circle cx="3" cy="6" r="1" fill="#30a050"/><circle cx="3" cy="9" r="1" fill="#3070d0"/><path d="M5 3H9M5 6H9M5 9H9" stroke="#bbb" stroke-width="0.8"/></svg></div>
<div class="br" style="top:108.5px;background:#f5f5f5"><svg style="left:6px;top:4px" width="12" height="9" viewBox="0 0 12 9"><path d="M0.5 4.5Q6 -1.5 11.5 4.5Q6 10.5 0.5 4.5Z" fill="#1f5a85"/><circle cx="6" cy="4.5" r="2" fill="#fff"/><circle cx="6" cy="4.5" r="1.1" fill="#1f5a85"/></svg><svg style="left:31px;top:3px" width="12" height="12" viewBox="0 0 12 12"><path d="M1 4L6 1L11 3.5L10.5 10L3 11Z" fill="#5fae88"/></svg><div class="t" style="left:45px;font-style:italic;color:#1e7a35">Refined Tunnel Portal GM copy: <span style="font-style:normal;color:#aaa;letter-spacing:0">Waikato Sandstone: Tunnel in Waikato Sandstone</span></div><svg style="left:513px;top:3px" width="13" height="12" viewBox="0 0 13 12"><path d="M2 5L6 1.5L10 5L6 9Z" fill="none" stroke="#555" stroke-width="0.9"/><path d="M3 6L9 6L6 9Z" fill="#2a6aa8"/><circle cx="11" cy="9.5" r="1.3" fill="#2a6aa8"/></svg><div class="t" style="left:527px;color:#333">Lithology</div><div class="a" style="left:716px;top:3px;width:12px;height:11px;background:#7d1a35"></div><div class="a" style="left:962px;top:1.5px;width:16px;height:15px;background:#bde3f7;border:1px solid #55b5ee"></div><svg style="left:965px;top:4px" width="10" height="10" viewBox="0 0 10 10"><path d="M1.5 0.5L9 5L1.5 9.5Z" fill="#1f4e6e"/></svg><svg style="left:980px;top:3px" width="12" height="12" viewBox="0 0 12 12"><path d="M1 1.5L4 3V9L1 10.5Z M5 3Q9 3.5 9.5 6Q9 8.5 5 9" fill="none" stroke="#6aa880" stroke-width="0.9"/></svg><svg style="left:997px;top:3px" width="12" height="12" viewBox="0 0 12 12"><path d="M1.5 1L10.5 6L1.5 11Z" fill="none" stroke="#2a6aa8" stroke-width="1.2"/></svg><svg style="left:492px;top:4px" width="10" height="10" viewBox="0 0 10 10"><path d="M1 1L9 9M9 1L1 9" stroke="#333" stroke-width="1"/></svg><svg style="left:700px;top:7px" width="7" height="5" viewBox="0 0 7 5"><path d="M0.5 0.8L3.5 3.8L6.5 0.8" stroke="#888" fill="none" stroke-width="0.8"/></svg><div class="a" style="left:802px;top:7px;width:146px;height:4px;background:#1f4a6a;border-radius:2px"></div><div class="a" style="left:942px;top:5px;width:8px;height:8px;background:#1f4a6a;border-radius:50%"></div><svg style="left:1030px;top:3px" width="11" height="12" viewBox="0 0 11 12"><rect x="0.5" y="0.5" width="10" height="11" fill="#f4f4f4" stroke="#bbb" stroke-width="0.7"/><circle cx="3" cy="3" r="1" fill="#e03030"/><circle cx="3" cy="6" r="1" fill="#30a050"/><circle cx="3" cy="9" r="1" fill="#3070d0"/><path d="M5 3H9M5 6H9M5 9H9" stroke="#bbb" stroke-width="0.8"/></svg></div>
<div class="br" style="top:126.0px;background:#b3e1f7"><svg style="left:6px;top:4px" width="12" height="9" viewBox="0 0 12 9"><path d="M0.5 4.5Q6 -1.5 11.5 4.5Q6 10.5 0.5 4.5Z" fill="#1f5a85"/><circle cx="6" cy="4.5" r="2" fill="#fff"/><circle cx="6" cy="4.5" r="1.1" fill="#1f5a85"/></svg><svg style="left:32px;top:3px" width="12" height="12" viewBox="0 0 12 12"><rect x="0.5" y="0.5" width="10" height="10" fill="#fff" stroke="#888" stroke-width="0.7"/><path d="M0.5 3.5H10.5M0.5 6.5H10.5M4 0.5V10.5M7 0.5V10.5" stroke="#999" stroke-width="0.6"/><rect x="5" y="7" width="5.5" height="3.5" fill="#e8c840"/><rect x="1" y="7" width="3.5" height="3.5" fill="#2a6aa8"/></svg><div class="t" style="left:45px;font-style:italic;color:#1e7a35">Historical Boreholes: <span style="font-style:normal;color:#333">survey</span></div><svg style="left:513px;top:3px" width="13" height="12" viewBox="0 0 13 12"><g fill="#e8b830"><rect x="1" y="1" width="1.5" height="1.5"/><rect x="1" y="5" width="1.5" height="1.5"/><rect x="1" y="9" width="1.5" height="1.5"/><rect x="9" y="3" width="1.5" height="1.5"/></g><g fill="#2a8ad0"><rect x="4" y="2" width="1.5" height="1.5"/><rect x="4" y="6" width="1.5" height="1.5"/><rect x="7" y="1" width="1.5" height="1.5"/><rect x="7" y="5" width="1.5" height="1.5"/><rect x="7" y="9" width="1.5" height="1.5"/><rect x="4" y="9" width="1.5" height="1.5"/></g></svg><div class="t" style="left:527px;color:#333">azimuth</div><div class="a" style="left:716px;top:3px;width:12px;height:11px;background:linear-gradient(90deg,#2050c0 0,#30a0e0 15%,#f0e020 45%,#f08020 70%,#e02020 100%)"></div><div class="t" style="left:731px;color:#333">azimuth</div><svg style="left:784px;top:7px" width="7" height="5" viewBox="0 0 7 5"><path d="M0.5 0.8L3.5 3.8L6.5 0.8" stroke="#888" fill="none" stroke-width="0.8"/></svg><div class="t" style="left:1013px;top:3px;font-size:12px;font-weight:bold;color:#4a4a4a">A</div><svg style="left:492px;top:4px" width="10" height="10" viewBox="0 0 10 10"><path d="M1 1L9 9M9 1L1 9" stroke="#333" stroke-width="1"/></svg><svg style="left:700px;top:7px" width="7" height="5" viewBox="0 0 7 5"><path d="M0.5 0.8L3.5 3.8L6.5 0.8" stroke="#888" fill="none" stroke-width="0.8"/></svg><div class="a" style="left:802px;top:7px;width:146px;height:4px;background:#1f4a6a;border-radius:2px"></div><div class="a" style="left:942px;top:5px;width:8px;height:8px;background:#1f4a6a;border-radius:50%"></div><svg style="left:1030px;top:3px" width="11" height="12" viewBox="0 0 11 12"><rect x="0.5" y="0.5" width="10" height="11" fill="#f4f4f4" stroke="#bbb" stroke-width="0.7"/><circle cx="3" cy="3" r="1" fill="#e03030"/><circle cx="3" cy="6" r="1" fill="#30a050"/><circle cx="3" cy="9" r="1" fill="#3070d0"/><path d="M5 3H9M5 6H9M5 9H9" stroke="#bbb" stroke-width="0.8"/></svg></div>
<div class="br" style="top:143.5px;background:#f5f5f5"><svg style="left:6px;top:4px" width="12" height="9" viewBox="0 0 12 9"><path d="M0.5 4.5Q6 -1.5 11.5 4.5Q6 10.5 0.5 4.5Z" fill="#1f5a85"/><circle cx="6" cy="4.5" r="2" fill="#fff"/><circle cx="6" cy="4.5" r="1.1" fill="#1f5a85"/></svg><svg style="left:32px;top:3px" width="12" height="12" viewBox="0 0 12 12"><rect x="0.5" y="0.5" width="10" height="10" fill="#fff" stroke="#888" stroke-width="0.7"/><path d="M0.5 3.5H10.5M0.5 6.5H10.5M4 0.5V10.5M7 0.5V10.5" stroke="#999" stroke-width="0.6"/><rect x="5" y="7" width="5.5" height="3.5" fill="#e8c840"/><circle cx="2.5" cy="8.5" r="2.5" fill="#222"/><circle cx="2.9" cy="8.5" r="1.3" fill="#f5f5f5"/></svg><div class="t" style="left:45px;font-style:italic;color:#1e7a35">Phase 1 Boreholes: <span style="font-style:normal;color:#333">survey</span></div><svg style="left:513px;top:3px" width="13" height="12" viewBox="0 0 13 12"><g fill="#e8b830"><rect x="1" y="1" width="1.5" height="1.5"/><rect x="1" y="5" width="1.5" height="1.5"/><rect x="1" y="9" width="1.5" height="1.5"/><rect x="9" y="3" width="1.5" height="1.5"/></g><g fill="#2a8ad0"><rect x="4" y="2" width="1.5" height="1.5"/><rect x="4" y="6" width="1.5" height="1.5"/><rect x="7" y="1" width="1.5" height="1.5"/><rect x="7" y="5" width="1.5" height="1.5"/><rect x="7" y="9" width="1.5" height="1.5"/><rect x="4" y="9" width="1.5" height="1.5"/></g></svg><div class="t" style="left:527px;color:#333">azimuth</div><div class="a" style="left:716px;top:3px;width:12px;height:11px;background:linear-gradient(90deg,#2050c0 0,#30a0e0 15%,#f0e020 45%,#f08020 70%,#e02020 100%)"></div><div class="t" style="left:731px;color:#333">azimuth</div><svg style="left:784px;top:7px" width="7" height="5" viewBox="0 0 7 5"><path d="M0.5 0.8L3.5 3.8L6.5 0.8" stroke="#888" fill="none" stroke-width="0.8"/></svg><div class="t" style="left:1013px;top:3px;font-size:12px;font-weight:bold;color:#4a4a4a">A</div><svg style="left:492px;top:4px" width="10" height="10" viewBox="0 0 10 10"><path d="M1 1L9 9M9 1L1 9" stroke="#333" stroke-width="1"/></svg><svg style="left:700px;top:7px" width="7" height="5" viewBox="0 0 7 5"><path d="M0.5 0.8L3.5 3.8L6.5 0.8" stroke="#888" fill="none" stroke-width="0.8"/></svg><div class="a" style="left:802px;top:7px;width:146px;height:4px;background:#1f4a6a;border-radius:2px"></div><div class="a" style="left:942px;top:5px;width:8px;height:8px;background:#1f4a6a;border-radius:50%"></div><svg style="left:1030px;top:3px" width="11" height="12" viewBox="0 0 11 12"><rect x="0.5" y="0.5" width="10" height="11" fill="#f4f4f4" stroke="#bbb" stroke-width="0.7"/><circle cx="3" cy="3" r="1" fill="#e03030"/><circle cx="3" cy="6" r="1" fill="#30a050"/><circle cx="3" cy="9" r="1" fill="#3070d0"/><path d="M5 3H9M5 6H9M5 9H9" stroke="#bbb" stroke-width="0.8"/></svg></div>
<div class="a" style="left:1047px;top:0;width:10px;height:162px;background:#fff;border-left:1px solid #e5e5e5"></div>
<div class="a" style="left:1049px;top:62px;width:6px;height:97px;background:#9a9a9a;border-radius:3px"></div>
</div>
<div class="a" style="left:1370px;top:680px;width:3px;height:162px;background:#f1f1f1"></div>
<div class="a" style="left:940px;top:676px;width:26px;height:2px;background:#bbb"></div>
<div class="a" style="left:1373px;top:680px;width:227px;height:162px;background:#f8f8f8;border:1px solid #cdcdcd;border-right:none"></div>
<svg style="left:1382px;top:684px" width="12" height="12" viewBox="0 0 12 12"><rect x="0.5" y="0.5" width="10" height="10" fill="#fff" stroke="#888" stroke-width="0.7"/><path d="M0.5 3.5H10.5M0.5 6.5H10.5M4 0.5V10.5M7 0.5V10.5" stroke="#999" stroke-width="0.6"/><rect x="5" y="7" width="5.5" height="3.5" fill="#e8c840"/><rect x="1" y="7" width="3.5" height="3.5" fill="#2a6aa8"/></svg>
<div class="lbl" style="left:1395px;top:685px;font-style:italic;font-weight:bold;color:#1e7a35;font-size:7.5px;letter-spacing:-0.35px">Historical Boreholes: <span style="font-style:normal;color:#333">survey</span></div>
<div class="lbl" style="left:1382px;top:702px">Slice mode:</div>
<div class="cb" style="left:1440px;top:699px;width:140px;height:16px"></div>
<div class="cbt" style="left:1446px;top:702px">From Scene</div>
<svg style="left:1569px;top:705px" width="7" height="5" viewBox="0 0 7 5"><path d="M0.5 0.8L3.5 3.8L6.5 0.8" stroke="#777" fill="none" stroke-width="0.8"/></svg>
<div class="lbl" style="left:1382px;top:722px">Query filter:</div>
<div class="cb" style="left:1440px;top:719px;width:140px;height:16px"></div>
<div class="cbt" style="left:1446px;top:722px">No Filter</div>
<svg style="left:1569px;top:725px" width="7" height="5" viewBox="0 0 7 5"><path d="M0.5 0.8L3.5 3.8L6.5 0.8" stroke="#777" fill="none" stroke-width="0.8"/></svg>
<div class="lbl" style="left:1382px;top:742px">Display filter:</div>
<div class="cb" style="left:1440px;top:739px;width:140px;height:16px"></div>
<div class="cbt" style="left:1446px;top:742px">From Scene</div>
<svg style="left:1569px;top:745px" width="7" height="5" viewBox="0 0 7 5"><path d="M0.5 0.8L3.5 3.8L6.5 0.8" stroke="#777" fill="none" stroke-width="0.8"/></svg>
<div class="a" style="left:1387px;top:763px;width:7px;height:7px;border:1px solid #ddd;background:#fafafa"></div>
<div class="lbl" style="left:1397px;top:763px;color:#c0c0c0">Enable filter:</div>
<div class="a" style="left:1445px;top:761px;width:62px;height:13px;border:1px solid #eee;background:#f9f9f9"></div>
<div class="lbl" style="left:1451px;top:763px;color:#c0c0c0">0</div>
<div class="lbl" style="left:1510px;top:762px;color:#c0c0c0">&#8211;</div>
<div class="a" style="left:1517px;top:761px;width:62px;height:13px;border:1px solid #eee;background:#f9f9f9"></div>
<div class="lbl" style="left:1523px;top:763px;color:#c0c0c0">0</div>
<div class="a" style="left:1390px;top:777.5px;width:186px;height:3px;background:#9a9a9a"></div>
<div class="a" style="left:1386px;top:775px;width:8px;height:8px;border-radius:50%;background:#9a9a9a"></div>
<div class="a" style="left:1572px;top:775px;width:8px;height:8px;border-radius:50%;background:#9a9a9a"></div>
<div class="lbl" style="left:1387px;top:784px;color:#c0c0c0;font-size:7.5px">0</div>
<div class="lbl" style="left:1574px;top:784px;color:#c0c0c0;font-size:7.5px">0</div>
<div class="lbl" style="left:1382px;top:801px">Cone length:</div>
<div class="cb" style="left:1440px;top:798px;width:140px;height:16px"></div>
<div class="cbt" style="left:1446px;top:801px">20.000</div>
<svg style="left:1570px;top:800px" width="7" height="12" viewBox="0 0 7 12"><path d="M1 4L3.5 1.5L6 4M1 8L3.5 10.5L6 8" stroke="#777" fill="none" stroke-width="0.8"/></svg>
<div class="lbl" style="left:1382px;top:822px">Scale values:</div>
<div class="cb" style="left:1440px;top:819px;width:118px;height:16px"></div>
<div class="cbt" style="left:1446px;top:822px">Fixed Length</div>
<svg style="left:1547px;top:825px" width="7" height="5" viewBox="0 0 7 5"><path d="M0.5 0.8L3.5 3.8L6.5 0.8" stroke="#777" fill="none" stroke-width="0.8"/></svg>
<svg style="left:1565px;top:821px" width="11" height="11" viewBox="0 0 11 11"><path d="M1 10Q3 1 5.5 1Q8 1 10 10M1 10H10M4 10V4M7 10V4" stroke="#888" fill="none" stroke-width="0.8"/></svg>
<div class="a" style="left:1585px;top:700px;width:10px;height:136px;background:#fafafa;border:1px solid #eee"></div>
<div class="a" style="left:1587px;top:701px;width:6px;height:116px;background:#9a9a9a;border-radius:3px"></div>
<div class="a" style="left:1371px;top:750px;width:2px;height:14px;background:#bbb"></div>
<div class="a" style="left:0;top:842px;width:1600px;height:15px;background:#f3f3f3"></div>
<svg style="left:1016px;top:844px" width="12" height="12" viewBox="0 0 12 12"><circle cx="4" cy="3" r="2" fill="#e04040"/><path d="M4 5V8" stroke="#e04040"/><path d="M1 11L3 8H10L11 11Z" fill="none" stroke="#4a7aa0" stroke-width="0.9"/></svg>
<div class="lbl" style="left:1031px;top:845px;font-style:italic;font-size:8px;color:#444;letter-spacing:-0.4px">&lt;No Coordinate System&gt;</div>
<svg style="left:1121px;top:844px" width="13" height="12" viewBox="0 0 13 12"><path d="M2 1V10H11M2 10L9 3" stroke="#5a9ac0" fill="none" stroke-width="1"/><path d="M1 3L2 1L3 3" stroke="#e04040" fill="none" stroke-width="0.9"/><circle cx="9" cy="3" r="1" fill="#30a050"/></svg>
<svg style="left:1277px;top:844px" width="12" height="12" viewBox="0 0 12 12"><path d="M2 10L3 7L9 1L11 3L5 9Z" fill="none" stroke="#4a7aa0" stroke-width="0.9"/></svg>
<div class="lbl" style="left:1291px;top:845px;font-style:italic;font-size:8px;color:#444;letter-spacing:-0.3px">&lt;No Code&gt;</div>
<svg style="left:1383px;top:845px" width="11" height="11" viewBox="0 0 11 11"><rect x="0.5" y="0.5" width="10" height="7" fill="#5aa37c"/><path d="M5.5 7.5V10M3 10H8" stroke="#5aa37c"/></svg>
<div class="lbl" style="left:1397px;top:845px;font-size:8px">Full Acceleration</div>
<div class="lbl" style="left:1480px;top:845px;font-size:8px">100+ FPS</div>
<svg style="left:1531px;top:843px" width="7" height="13" viewBox="0 0 7 13"><path d="M3.5 1V12M1 3.5L3.5 1L6 3.5M1 9.5L3.5 12L6 9.5" stroke="#5aa37c" fill="none" stroke-width="0.9"/></svg>
<div class="lbl" style="left:1545px;top:845px;font-size:8px">Z-Scale 1.0</div>
</body></html>
